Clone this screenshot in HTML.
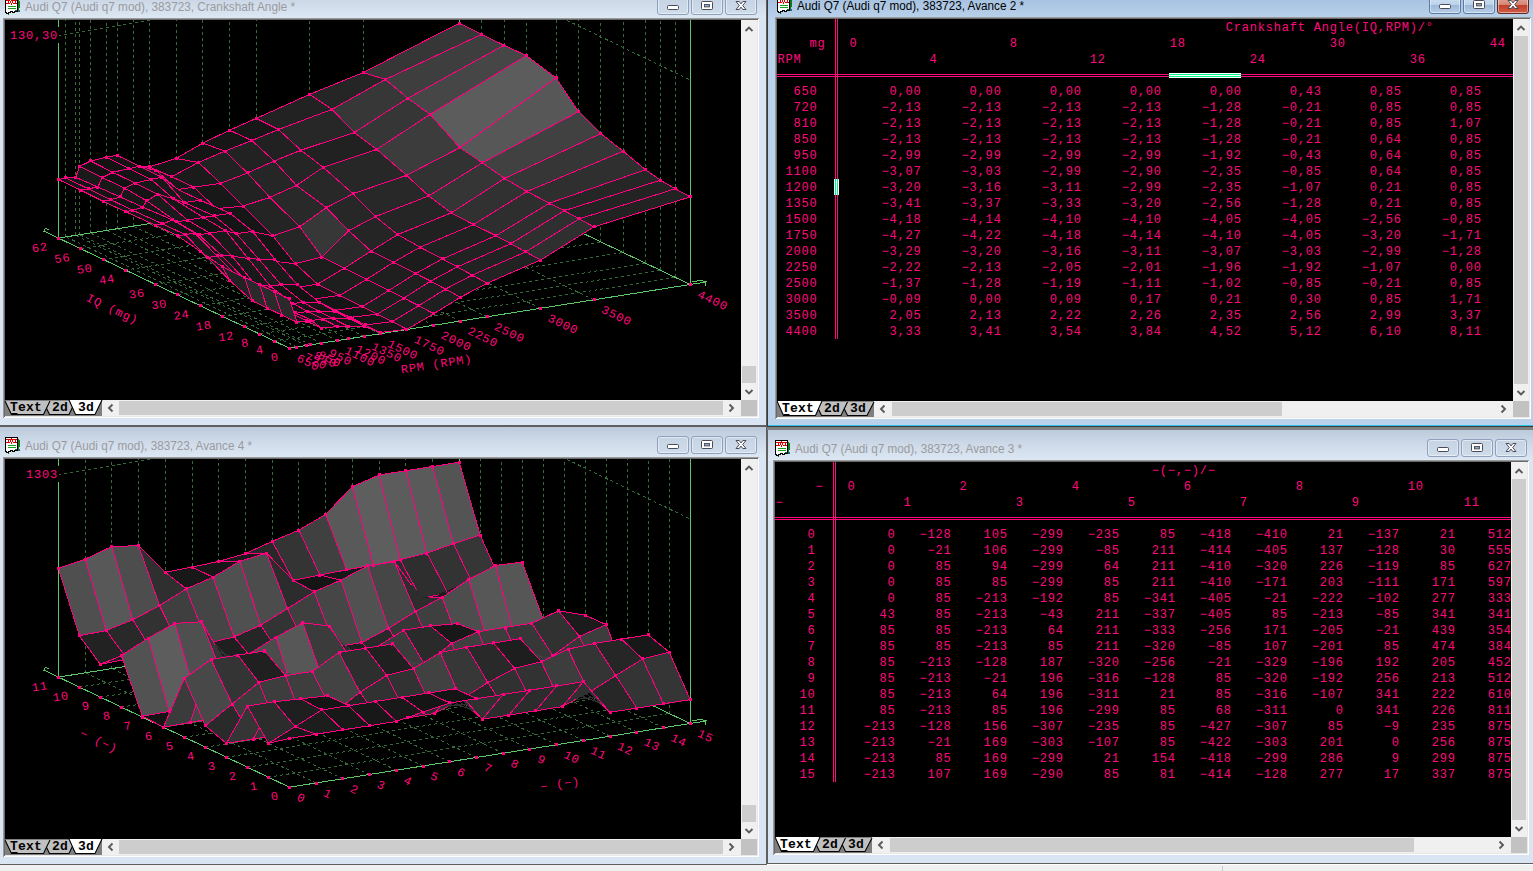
<!DOCTYPE html><html><head><meta charset="utf-8"><title>WinOLS</title><style>
*{box-sizing:border-box;margin:0;padding:0}
html,body{width:1533px;height:871px;overflow:hidden;background:#f0f0f0}
body{position:relative;font-family:"Liberation Sans",sans-serif}
.a{position:absolute}
.win{position:absolute;overflow:hidden}
.tt{position:absolute;font:12px "Liberation Sans",sans-serif;white-space:pre;transform-origin:0 0;line-height:14px}
.mono{position:absolute;font:12px "Liberation Mono",monospace;letter-spacing:0.8px;white-space:pre;color:#ff0a7c;line-height:16px;height:16px}
.tab{position:absolute;font:bold 13px "Liberation Mono",monospace;letter-spacing:0.2px;color:#000;white-space:pre;line-height:14px}
svg{position:absolute;display:block}
.d{width:3px;height:3px;fill:#ff0080;stroke:none}
.e{fill:none}
.t{font:12px "Liberation Mono",monospace;letter-spacing:0.8px;fill:#ff0a7c}
</style></head><body>
<div class="a" style="left:0px;top:864px;width:1533px;height:7px;background:#f0f0f0;border-top:1px solid #fff"></div>
<div class="a" style="left:1222px;top:866px;width:1px;height:5px;background:#c8c8c8;"></div>
<div class="a" style="left:-5px;top:-13px;width:772px;height:439px;background:#d9e5f2;border:1px solid #5f5f5f;"></div>
<div class="a" style="left:-4px;top:-12px;width:770px;height:31px;background:linear-gradient(#bccadb,#cfdbe9 50%,#dde8f4);"></div>
<div class="a" style="left:3px;top:18px;width:756px;height:400px;background:#fff;border-top:1px solid #9a9a9a;border-left:1px solid #9a9a9a;"></div>
<div class="a" style="left:4px;top:19px;width:754px;height:398px;background:#e8e8e8;border-top:1px solid #6a6a6a;border-left:1px solid #6a6a6a;"></div>
<div class="a" style="left:5px;top:20px;width:736px;height:380px;background:#000;"></div>
<svg style="left:5px;top:-2px" width="17" height="17" viewBox="0 0 17 17" shape-rendering="crispEdges"><path d="M0.5 0.5H12.5V13.5H9.5V14.5H7.5V13.5H5.5V14.5H3.5V15.5H1.5V14.5H0.5Z" fill="#fff" stroke="#000"/><path d="M13 2V11M14 3V10M12 12H10M4 16H3M13 11v1" stroke="#0a7a1a" fill="none"/><path d="M13 12h2v2h-2z" fill="#1a6a8a"/><path d="M1 2.5H5M3 2.5V5.5M1 5.5H5 M8 2.5H12M10 2.5V5.5M8 5.5H12" stroke="#e00000" fill="none"/><path d="M6.5 2L8 4L6.5 6L5 4Z" stroke="#e00000" fill="none"/><path d="M3 8.5H11" stroke="#16a020"/><path d="M3 10.5H11" stroke="#16a020"/></svg>
<div class="tt" style="left:25px;top:0px;color:#9a9a9e;transform:scaleX(0.9824)">Audi Q7 (Audi q7 mod), 383723, Crankshaft Angle *</div>
<div class="a" style="left:657px;top:-3px;width:32px;height:18px;border:1px solid #8f9fbc;border-radius:3px;background:linear-gradient(#c5d3e3,#cfdcea);box-shadow:inset 0 0 0 1px rgba(255,255,255,.45)"></div>
<svg style="left:657px;top:-3px" width="32" height="18" viewBox="0 0 32 18"><rect x="10.5" y="8.5" width="11" height="4" rx="1" fill="#fff" stroke="#4a4a58"/></svg>
<div class="a" style="left:691px;top:-3px;width:32px;height:18px;border:1px solid #8f9fbc;border-radius:3px;background:linear-gradient(#c5d3e3,#cfdcea);box-shadow:inset 0 0 0 1px rgba(255,255,255,.45)"></div>
<svg style="left:691px;top:-3px" width="32" height="18" viewBox="0 0 32 18"><rect x="10.5" y="4.5" width="11" height="8" rx="1" fill="#fff" stroke="#4a4a58"/><rect x="13.5" y="7.5" width="5" height="2.4" fill="#8ea4c4" stroke="#4a4a58" stroke-width=".9"/></svg>
<div class="a" style="left:725px;top:-3px;width:32px;height:18px;border:1px solid #8f9fbc;border-radius:3px;background:linear-gradient(#c5d3e3,#cfdcea);box-shadow:inset 0 0 0 1px rgba(255,255,255,.45)"></div>
<svg style="left:725px;top:-3px" width="32" height="18" viewBox="0 0 32 18"><path d="M11 4.5h3.2l1.8 2.4 1.8-2.4H21l-3.3 4 3.3 4h-3.2L16 10.1l-1.8 2.4H11l3.3-4z" fill="#fff" stroke="#4a4a58" stroke-width="1"/></svg>
<div class="a" style="left:741px;top:20px;width:16px;height:380px;background:#f0f0f0;"></div>
<div class="a" style="left:742px;top:366px;width:14px;height:17px;background:#cdcdcd;"></div>
<svg style="left:741px;top:20px" width="16" height="380"><polyline points="4.5,11 8,7.5 11.5,11" fill="none" stroke="#5a5a5a" stroke-width="1.9"/><polyline points="4.5,370 8,373.5 11.5,370" fill="none" stroke="#5a5a5a" stroke-width="1.9"/></svg>
<div class="a" style="left:741px;top:400px;width:16px;height:16px;background:#c2c2c2;"></div>
<div class="a" style="left:5px;top:400px;width:97px;height:16px;background:#808080;"></div>
<div class="a" style="left:102px;top:400px;width:639px;height:16px;background:#f0f0f0;"></div>
<div class="a" style="left:119px;top:401px;width:604px;height:14px;background:#cdcdcd;"></div>
<svg style="left:102px;top:400px" width="639" height="16"><polyline points="10.5,4.5 7.0,8 10.5,11.5" fill="none" stroke="#5a5a5a" stroke-width="1.9"/><polyline points="627.5,4.5 631.0,8 627.5,11.5" fill="none" stroke="#5a5a5a" stroke-width="1.9"/></svg>
<svg style="left:5px;top:399px" width="98" height="17" viewBox="0 -1 98 17"><polygon points="38,1 70.5,1 64,14.5 44.5,14.5" fill="#c0c0c0" stroke="none"/><polyline points="38,1 44.5,14.5 64,14.5 70.5,1" fill="none" stroke="#000" stroke-width="1.1"/><polygon points="0,1 45,1 38.5,14.5 6.5,14.5" fill="#c0c0c0" stroke="none"/><polyline points="0,1 6.5,14.5 38.5,14.5 45,1" fill="none" stroke="#000" stroke-width="1.1"/><polygon points="64,0 97,0 90,14.5 70.5,14.5" fill="#fff" stroke="none"/><polyline points="64,0 70.5,14.5 90,14.5 97,0" fill="none" stroke="#000" stroke-width="1.1"/><path d="M6.5 13.5h6" stroke="#000" stroke-width="1"/></svg>
<div class="tab" style="left:10px;top:401px">Text</div>
<div class="tab" style="left:52px;top:401px">2d</div>
<div class="tab" style="left:78px;top:401px">3d</div>
<svg style="left:5px;top:20px" width="736" height="380" viewBox="5 20 736 380" shape-rendering="crispEdges" text-rendering="geometricPrecision">
<g fill="none" stroke-width="1"><line x1="65.9" y1="236.9" x2="65.9" y2="-87.6" stroke="#356b38" stroke-dasharray="3 3"/>
<line x1="75.6" y1="235.4" x2="75.6" y2="-89.1" stroke="#356b38" stroke-dasharray="3 3"/>
<line x1="79.8" y1="234.7" x2="79.8" y2="-89.8" stroke="#356b38" stroke-dasharray="3 3"/>
<line x1="90.5" y1="233" x2="90.5" y2="-91.5" stroke="#356b38" stroke-dasharray="3 3"/>
<line x1="106.5" y1="230.4" x2="106.5" y2="-94.1" stroke="#356b38" stroke-dasharray="3 3"/>
<line x1="117.2" y1="228.7" x2="117.2" y2="-95.8" stroke="#356b38" stroke-dasharray="3 3"/>
<line x1="133.3" y1="226.2" x2="133.3" y2="-98.3" stroke="#356b38" stroke-dasharray="3 3"/>
<line x1="149.3" y1="223.6" x2="149.3" y2="-100.9" stroke="#356b38" stroke-dasharray="3 3"/>
<line x1="176" y1="219.4" x2="176" y2="-105.1" stroke="#356b38" stroke-dasharray="3 3"/>
<line x1="202.7" y1="215.1" x2="202.7" y2="-109.4" stroke="#356b38" stroke-dasharray="3 3"/>
<line x1="229.5" y1="210.9" x2="229.5" y2="-113.6" stroke="#356b38" stroke-dasharray="3 3"/>
<line x1="256.2" y1="206.6" x2="256.2" y2="-117.9" stroke="#356b38" stroke-dasharray="3 3"/>
<line x1="309.6" y1="198.1" x2="309.6" y2="-126.4" stroke="#356b38" stroke-dasharray="3 3"/>
<line x1="363.1" y1="189.6" x2="363.1" y2="-134.9" stroke="#356b38" stroke-dasharray="3 3"/>
<line x1="675.3" y1="277.4" x2="675.3" y2="-47.1" stroke="#356b38" stroke-dasharray="3 3"/>
<line x1="660.4" y1="270.3" x2="660.4" y2="-54.2" stroke="#356b38" stroke-dasharray="3 3"/>
<line x1="645.5" y1="263.2" x2="645.5" y2="-61.3" stroke="#356b38" stroke-dasharray="3 3"/>
<line x1="623.2" y1="252.5" x2="623.2" y2="-72" stroke="#356b38" stroke-dasharray="3 3"/>
<line x1="600.8" y1="241.9" x2="600.8" y2="-82.6" stroke="#356b38" stroke-dasharray="3 3"/>
<line x1="578.5" y1="231.2" x2="578.5" y2="-93.3" stroke="#356b38" stroke-dasharray="3 3"/>
<line x1="556.1" y1="220.5" x2="556.1" y2="-104" stroke="#356b38" stroke-dasharray="3 3"/>
<line x1="526.3" y1="206.3" x2="526.3" y2="-118.2" stroke="#356b38" stroke-dasharray="3 3"/>
<line x1="504" y1="195.7" x2="504" y2="-128.8" stroke="#356b38" stroke-dasharray="3 3"/>
<line x1="481.6" y1="185" x2="481.6" y2="-139.5" stroke="#356b38" stroke-dasharray="3 3"/>
<line x1="58.4" y1="35.8" x2="459.2" y2="-31.7" stroke="#356b38" stroke-dasharray="3 3"/>
<line x1="459.2" y1="-31.7" x2="690.2" y2="80" stroke="#356b38" stroke-dasharray="3 3"/>
<line x1="296.9" y1="347.1" x2="65.9" y2="236.9" stroke="#356b38" stroke-dasharray="3 3"/>
<line x1="306.5" y1="345.5" x2="75.6" y2="235.4" stroke="#356b38" stroke-dasharray="3 3"/>
<line x1="310.8" y1="344.9" x2="79.8" y2="234.7" stroke="#356b38" stroke-dasharray="3 3"/>
<line x1="321.5" y1="343.1" x2="90.5" y2="233" stroke="#356b38" stroke-dasharray="3 3"/>
<line x1="337.5" y1="340.6" x2="106.5" y2="230.4" stroke="#356b38" stroke-dasharray="3 3"/>
<line x1="348.2" y1="338.9" x2="117.2" y2="228.7" stroke="#356b38" stroke-dasharray="3 3"/>
<line x1="364.2" y1="336.4" x2="133.3" y2="226.2" stroke="#356b38" stroke-dasharray="3 3"/>
<line x1="380.2" y1="333.8" x2="149.3" y2="223.6" stroke="#356b38" stroke-dasharray="3 3"/>
<line x1="407" y1="329.6" x2="176" y2="219.4" stroke="#356b38" stroke-dasharray="3 3"/>
<line x1="433.7" y1="325.3" x2="202.7" y2="215.1" stroke="#356b38" stroke-dasharray="3 3"/>
<line x1="460.4" y1="321.1" x2="229.5" y2="210.9" stroke="#356b38" stroke-dasharray="3 3"/>
<line x1="487.1" y1="316.8" x2="256.2" y2="206.6" stroke="#356b38" stroke-dasharray="3 3"/>
<line x1="540.6" y1="308.3" x2="309.6" y2="198.1" stroke="#356b38" stroke-dasharray="3 3"/>
<line x1="594" y1="299.8" x2="363.1" y2="189.6" stroke="#356b38" stroke-dasharray="3 3"/>
<line x1="274.5" y1="341.1" x2="675.3" y2="277.4" stroke="#356b38" stroke-dasharray="3 3"/>
<line x1="259.6" y1="334" x2="660.4" y2="270.3" stroke="#356b38" stroke-dasharray="3 3"/>
<line x1="244.7" y1="326.9" x2="645.5" y2="263.2" stroke="#356b38" stroke-dasharray="3 3"/>
<line x1="222.4" y1="316.3" x2="623.2" y2="252.5" stroke="#356b38" stroke-dasharray="3 3"/>
<line x1="200" y1="305.6" x2="600.8" y2="241.9" stroke="#356b38" stroke-dasharray="3 3"/>
<line x1="177.7" y1="294.9" x2="578.5" y2="231.2" stroke="#356b38" stroke-dasharray="3 3"/>
<line x1="155.3" y1="284.3" x2="556.1" y2="220.5" stroke="#356b38" stroke-dasharray="3 3"/>
<line x1="125.5" y1="270.1" x2="526.3" y2="206.3" stroke="#356b38" stroke-dasharray="3 3"/>
<line x1="103.2" y1="259.4" x2="504" y2="195.7" stroke="#356b38" stroke-dasharray="3 3"/>
<line x1="80.8" y1="248.7" x2="481.6" y2="185" stroke="#356b38" stroke-dasharray="3 3"/>
<line x1="289.4" y1="348.2" x2="58.4" y2="238.1" stroke="#5cc868"/>
<line x1="58.4" y1="238.1" x2="459.2" y2="174.3" stroke="#5cc868"/>
<line x1="459.2" y1="174.3" x2="690.2" y2="284.5" stroke="#5cc868"/>
<line x1="690.2" y1="284.5" x2="289.4" y2="348.2" stroke="#5cc868"/>
<line x1="58.4" y1="238.1" x2="58.4" y2="3.6" stroke="#5cc868"/>
<line x1="459.2" y1="174.3" x2="459.2" y2="-90.2" stroke="#5cc868"/>
<line x1="690.2" y1="284.5" x2="690.2" y2="0" stroke="#5cc868"/>
<polyline points="690.2,284.5 706,282 705.5,286" fill="none" stroke="#5cc868"/>
<polyline points="692.2,281.5 702,280.5 706,282" fill="none" stroke="#5cc868"/>
<polyline points="58.4,238.1 44,231.2 45.5,228.2 49,229.7" fill="none" stroke="#5cc868"/></g>
<g stroke="#ff0080" stroke-width="1"><path d="M385.4,79.4 363.1,72.6 459.2,23.2 481.6,34.4z" fill="#363636" stroke="#363636" stroke-width=".7"/>
<path d="M332,109.4 309.6,94.4 363.1,72.6 385.4,79.4z" fill="#252525" stroke="#252525" stroke-width=".7"/>
<path d="M278.5,129.5 256.2,118.4 309.6,94.4 332,109.4z" fill="#222222" stroke="#222222" stroke-width=".7"/>
<path d="M251.8,140.5 229.5,130.2 256.2,118.4 278.5,129.5z" fill="#171717" stroke="#171717" stroke-width=".7"/>
<path d="M225.1,151.1 202.7,143.2 229.5,130.2 251.8,140.5z" fill="#161616" stroke="#161616" stroke-width=".7"/>
<path d="M198.4,162.4 176,158.5 202.7,143.2 225.1,151.1z" fill="#151515" stroke="#151515" stroke-width=".7"/>
<path d="M171.6,176.7 149.3,166.9 176,158.5 198.4,162.4z" fill="#151515" stroke="#151515" stroke-width=".7"/>
<path d="M155.6,170.1 133.3,166.2 149.3,166.9 171.6,176.7z" fill="#1d1d1d" stroke="#1d1d1d" stroke-width=".7"/>
<path d="M139.6,166.3 117.2,155.3 133.3,166.2 155.6,170.1z" fill="#202020" stroke="#202020" stroke-width=".7"/>
<path d="M128.9,168.6 106.5,157.2 117.2,155.3 139.6,166.3z" fill="#141414" stroke="#141414" stroke-width=".7"/>
<path d="M112.9,172.3 90.5,161 106.5,157.2 128.9,168.6z" fill="#131313" stroke="#131313" stroke-width=".7"/>
<path d="M102.2,177.6 79.8,166.3 90.5,161 112.9,172.3z" fill="#131313" stroke="#131313" stroke-width=".7"/>
<path d="M97.9,187 75.6,177.3 79.8,166.3 102.2,177.6z" fill="#1a1a1a" stroke="#1a1a1a" stroke-width=".7"/>
<path d="M88.3,188.8 65.9,178 75.6,177.3 97.9,187z" fill="#151515" stroke="#151515" stroke-width=".7"/>
<path d="M80.8,190.1 58.4,179.5 65.9,178 88.3,188.8z" fill="#151515" stroke="#151515" stroke-width=".7"/>
<path d="M407.8,98.3 385.4,79.4 481.6,34.4 504,45.2z" fill="#3e3e3e" stroke="#3e3e3e" stroke-width=".7"/>
<path d="M354.3,132.5 332,109.4 385.4,79.4 407.8,98.3z" fill="#373737" stroke="#373737" stroke-width=".7"/>
<path d="M300.9,150.2 278.5,129.5 332,109.4 354.3,132.5z" fill="#272727" stroke="#272727" stroke-width=".7"/>
<path d="M274.2,161 251.8,140.5 278.5,129.5 300.9,150.2z" fill="#212121" stroke="#212121" stroke-width=".7"/>
<path d="M247.4,173 225.1,151.1 251.8,140.5 274.2,161z" fill="#222222" stroke="#222222" stroke-width=".7"/>
<path d="M220.7,183.4 198.4,162.4 225.1,151.1 247.4,173z" fill="#222222" stroke="#222222" stroke-width=".7"/>
<path d="M194,187.2 171.6,176.7 198.4,162.4 220.7,183.4zM196.2,177.4 185,169.6 198.4,162.4 209.5,172.9zM182.8,182 171.6,176.7 185,169.6 196.2,177.4zM207.4,185.3 196.2,177.4 209.5,172.9 220.7,183.4zM194,187.2 182.8,182 196.2,177.4 207.4,185.3z" fill="#1b1b1b" stroke="#1b1b1b" stroke-width=".7"/>
<path d="M178,189.5 155.6,170.1 171.6,176.7 194,187.2z" fill="#181818" stroke="#181818" stroke-width=".7"/>
<path d="M161.9,177.2 139.6,166.3 155.6,170.1 178,189.5z" fill="#1b1b1b" stroke="#1b1b1b" stroke-width=".7"/>
<path d="M151.2,179.4 128.9,168.6 139.6,166.3 161.9,177.2z" fill="#141414" stroke="#141414" stroke-width=".7"/>
<path d="M135.2,183.2 112.9,172.3 128.9,168.6 151.2,179.4z" fill="#141414" stroke="#141414" stroke-width=".7"/>
<path d="M124.5,188 102.2,177.6 112.9,172.3 135.2,183.2z" fill="#121212" stroke="#121212" stroke-width=".7"/>
<path d="M120.3,197 97.9,187 102.2,177.6 124.5,188z" fill="#181818" stroke="#181818" stroke-width=".7"/>
<path d="M110.6,199.7 88.3,188.8 97.9,187 120.3,197z" fill="#141414" stroke="#141414" stroke-width=".7"/>
<path d="M103.2,201.4 80.8,190.1 88.3,188.8 110.6,199.7z" fill="#141414" stroke="#141414" stroke-width=".7"/>
<path d="M430.1,114.4 407.8,98.3 504,45.2 526.3,55.6z" fill="#464646" stroke="#464646" stroke-width=".7"/>
<path d="M376.7,149.3 354.3,132.5 407.8,98.3 430.1,114.4z" fill="#363636" stroke="#363636" stroke-width=".7"/>
<path d="M323.2,167.3 300.9,150.2 354.3,132.5 376.7,149.3z" fill="#212121" stroke="#212121" stroke-width=".7"/>
<path d="M296.5,185.4 274.2,161 300.9,150.2 323.2,167.3z" fill="#252525" stroke="#252525" stroke-width=".7"/>
<path d="M269.8,197.3 247.4,173 274.2,161 296.5,185.4z" fill="#262626" stroke="#262626" stroke-width=".7"/>
<path d="M243.1,206.1 220.7,183.4 247.4,173 269.8,197.3z" fill="#222222" stroke="#222222" stroke-width=".7"/>
<path d="M216.3,208.6 194,187.2 220.7,183.4 243.1,206.1z" fill="#181818" stroke="#181818" stroke-width=".7"/>
<path d="M200.3,200.2 178,189.5 194,187.2 216.3,208.6zM197.2,196.4 186,188.4 194,187.2 205.2,197.9zM189.1,194.8 178,189.5 186,188.4 197.2,196.4zM208.3,204.4 197.2,196.4 205.2,197.9 216.3,208.6zM200.3,200.2 189.1,194.8 197.2,196.4 208.3,204.4z" fill="#191919" stroke="#191919" stroke-width=".7"/>
<path d="M184.3,202.6 161.9,177.2 178,189.5 200.3,200.2zM181.1,192.4 170,183.3 178,189.5 189.1,194.8zM173.1,189.9 161.9,177.2 170,183.3 181.1,192.4zM192.3,201.4 181.1,192.4 189.1,194.8 200.3,200.2zM184.3,202.6 173.1,189.9 181.1,192.4 192.3,201.4z" fill="#1b1b1b" stroke="#1b1b1b" stroke-width=".7"/>
<path d="M173.6,198.9 151.2,179.4 161.9,177.2 184.3,202.6z" fill="#181818" stroke="#181818" stroke-width=".7"/>
<path d="M157.6,194.1 135.2,183.2 151.2,179.4 173.6,198.9z" fill="#171717" stroke="#171717" stroke-width=".7"/>
<path d="M146.9,201 124.5,188 135.2,183.2 157.6,194.1z" fill="#141414" stroke="#141414" stroke-width=".7"/>
<path d="M142.6,207 120.3,197 124.5,188 146.9,201z" fill="#181818" stroke="#181818" stroke-width=".7"/>
<path d="M133,210.4 110.6,199.7 120.3,197 142.6,207z" fill="#141414" stroke="#141414" stroke-width=".7"/>
<path d="M125.5,211.6 103.2,201.4 110.6,199.7 133,210.4z" fill="#151515" stroke="#151515" stroke-width=".7"/>
<path d="M459.9,147.7 430.1,114.4 526.3,55.6 556.1,77.9zM493.1,98.9 478.2,85 526.3,55.6 541.2,66.8zM445,131.1 430.1,114.4 478.2,85 493.1,98.9zM508,112.8 493.1,98.9 541.2,66.8 556.1,77.9zM459.9,147.7 445,131.1 493.1,98.9 508,112.8z" fill="#5c5c5c" stroke="#5c5c5c" stroke-width=".7"/>
<path d="M406.5,175.3 376.7,149.3 430.1,114.4 459.9,147.7z" fill="#3c3c3c" stroke="#3c3c3c" stroke-width=".7"/>
<path d="M353,193.7 323.2,167.3 376.7,149.3 406.5,175.3z" fill="#272727" stroke="#272727" stroke-width=".7"/>
<path d="M326.3,207.7 296.5,185.4 323.2,167.3 353,193.7z" fill="#282828" stroke="#282828" stroke-width=".7"/>
<path d="M299.6,226.7 269.8,197.3 296.5,185.4 326.3,207.7z" fill="#292929" stroke="#292929" stroke-width=".7"/>
<path d="M272.9,235.9 243.1,206.1 269.8,197.3 299.6,226.7z" fill="#242424" stroke="#242424" stroke-width=".7"/>
<path d="M246.1,230.3 216.3,208.6 243.1,206.1 272.9,235.9z" fill="#161616" stroke="#161616" stroke-width=".7"/>
<path d="M230.1,213.3 200.3,200.2 216.3,208.6 246.1,230.3z" fill="#202020" stroke="#202020" stroke-width=".7"/>
<path d="M214.1,215.8 184.3,202.6 200.3,200.2 230.1,213.3z" fill="#161616" stroke="#161616" stroke-width=".7"/>
<path d="M203.4,217.5 173.6,198.9 184.3,202.6 214.1,215.8z" fill="#161616" stroke="#161616" stroke-width=".7"/>
<path d="M187.4,220.1 157.6,194.1 173.6,198.9 203.4,217.5z" fill="#161616" stroke="#161616" stroke-width=".7"/>
<path d="M176.7,221.8 146.9,201 157.6,194.1 187.4,220.1z" fill="#1b1b1b" stroke="#1b1b1b" stroke-width=".7"/>
<path d="M172.4,219.9 142.6,207 146.9,201 176.7,221.8z" fill="#161616" stroke="#161616" stroke-width=".7"/>
<path d="M162.8,224 133,210.4 142.6,207 172.4,219.9z" fill="#141414" stroke="#141414" stroke-width=".7"/>
<path d="M155.3,225.2 125.5,211.6 133,210.4 162.8,224z" fill="#151515" stroke="#151515" stroke-width=".7"/>
<path d="M482.3,162.8 459.9,147.7 556.1,77.9 578.5,111.7zM519.2,125 508,112.8 556.1,77.9 567.3,94.8zM471.1,155.3 459.9,147.7 508,112.8 519.2,125zM530.4,137.2 519.2,125 567.3,94.8 578.5,111.7zM482.3,162.8 471.1,155.3 519.2,125 530.4,137.2z" fill="#575757" stroke="#575757" stroke-width=".7"/>
<path d="M428.8,195.9 406.5,175.3 459.9,147.7 482.3,162.8z" fill="#323232" stroke="#323232" stroke-width=".7"/>
<path d="M375.4,216.6 353,193.7 406.5,175.3 428.8,195.9z" fill="#282828" stroke="#282828" stroke-width=".7"/>
<path d="M348.7,230.7 326.3,207.7 353,193.7 375.4,216.6z" fill="#272727" stroke="#272727" stroke-width=".7"/>
<path d="M321.9,257 299.6,226.7 326.3,207.7 348.7,230.7z" fill="#373737" stroke="#373737" stroke-width=".7"/>
<path d="M295.2,263.7 272.9,235.9 299.6,226.7 321.9,257z" fill="#262626" stroke="#262626" stroke-width=".7"/>
<path d="M268.5,260.6 246.1,230.3 272.9,235.9 295.2,263.7z" fill="#151515" stroke="#151515" stroke-width=".7"/>
<path d="M252.5,231.3 230.1,213.3 246.1,230.3 268.5,260.6zM249.3,233.9 238.1,221.8 246.1,230.3 257.3,245.4zM241.3,222.3 230.1,213.3 238.1,221.8 249.3,233.9zM260.5,245.9 249.3,233.9 257.3,245.4 268.5,260.6zM252.5,231.3 241.3,222.3 249.3,233.9 260.5,245.9z" fill="#222222" stroke="#222222" stroke-width=".7"/>
<path d="M236.4,233.8 214.1,215.8 230.1,213.3 252.5,231.3z" fill="#151515" stroke="#151515" stroke-width=".7"/>
<path d="M225.7,230.6 203.4,217.5 214.1,215.8 236.4,233.8z" fill="#151515" stroke="#151515" stroke-width=".7"/>
<path d="M209.7,233.1 187.4,220.1 203.4,217.5 225.7,230.6z" fill="#131313" stroke="#131313" stroke-width=".7"/>
<path d="M199,234.8 176.7,221.8 187.4,220.1 209.7,233.1z" fill="#131313" stroke="#131313" stroke-width=".7"/>
<path d="M194.8,233.1 172.4,219.9 176.7,221.8 199,234.8z" fill="#151515" stroke="#151515" stroke-width=".7"/>
<path d="M185.1,234.6 162.8,224 172.4,219.9 194.8,233.1z" fill="#141414" stroke="#141414" stroke-width=".7"/>
<path d="M177.7,235.8 155.3,225.2 162.8,224 185.1,234.6z" fill="#151515" stroke="#151515" stroke-width=".7"/>
<path d="M504.6,178.4 482.3,162.8 578.5,111.7 600.8,133.6z" fill="#414141" stroke="#414141" stroke-width=".7"/>
<path d="M451.2,212.9 428.8,195.9 482.3,162.8 504.6,178.4z" fill="#353535" stroke="#353535" stroke-width=".7"/>
<path d="M397.7,234.6 375.4,216.6 428.8,195.9 451.2,212.9z" fill="#252525" stroke="#252525" stroke-width=".7"/>
<path d="M371,251.1 348.7,230.7 375.4,216.6 397.7,234.6z" fill="#252525" stroke="#252525" stroke-width=".7"/>
<path d="M344.3,268.2 321.9,257 348.7,230.7 371,251.1zM346.5,251.8 335.3,243.9 348.7,230.7 359.8,240.9zM333.1,262.6 321.9,257 335.3,243.9 346.5,251.8zM357.6,259.7 346.5,251.8 359.8,240.9 371,251.1zM344.3,268.2 333.1,262.6 346.5,251.8 357.6,259.7z" fill="#2a2a2a" stroke="#2a2a2a" stroke-width=".7"/>
<path d="M317.6,284.1 295.2,263.7 321.9,257 344.3,268.2zM319.8,268.3 308.6,260.4 321.9,257 333.1,262.6zM306.4,273.9 295.2,263.7 308.6,260.4 319.8,268.3zM330.9,276.2 319.8,268.3 333.1,262.6 344.3,268.2zM317.6,284.1 306.4,273.9 319.8,268.3 330.9,276.2z" fill="#1d1d1d" stroke="#1d1d1d" stroke-width=".7"/>
<path d="M290.8,288.4 268.5,260.6 295.2,263.7 317.6,284.1z" fill="#181818" stroke="#181818" stroke-width=".7"/>
<path d="M274.8,259.1 252.5,231.3 268.5,260.6 290.8,288.4z" fill="#252525" stroke="#252525" stroke-width=".7"/>
<path d="M258.8,259.2 236.4,233.8 252.5,231.3 274.8,259.1z" fill="#1d1d1d" stroke="#1d1d1d" stroke-width=".7"/>
<path d="M248.1,258.4 225.7,230.6 236.4,233.8 258.8,259.2z" fill="#191919" stroke="#191919" stroke-width=".7"/>
<path d="M232.1,256.1 209.7,233.1 225.7,230.6 248.1,258.4z" fill="#1a1a1a" stroke="#1a1a1a" stroke-width=".7"/>
<path d="M221.4,255.3 199,234.8 209.7,233.1 232.1,256.1z" fill="#171717" stroke="#171717" stroke-width=".7"/>
<path d="M217.1,256 194.8,233.1 199,234.8 221.4,255.3z" fill="#171717" stroke="#171717" stroke-width=".7"/>
<path d="M207.5,257.5 185.1,234.6 194.8,233.1 217.1,256z" fill="#1a1a1a" stroke="#1a1a1a" stroke-width=".7"/>
<path d="M200,251.3 177.7,235.8 185.1,234.6 207.5,257.5z" fill="#161616" stroke="#161616" stroke-width=".7"/>
<path d="M527,191.5 504.6,178.4 600.8,133.6 623.2,151.2z" fill="#363636" stroke="#363636" stroke-width=".7"/>
<path d="M473.5,224.6 451.2,212.9 504.6,178.4 527,191.5z" fill="#313131" stroke="#313131" stroke-width=".7"/>
<path d="M420.1,247.2 397.7,234.6 451.2,212.9 473.5,224.6z" fill="#212121" stroke="#212121" stroke-width=".7"/>
<path d="M393.4,262.3 371,251.1 397.7,234.6 420.1,247.2z" fill="#1e1e1e" stroke="#1e1e1e" stroke-width=".7"/>
<path d="M366.6,279.3 344.3,268.2 371,251.1 393.4,262.3z" fill="#1f1f1f" stroke="#1f1f1f" stroke-width=".7"/>
<path d="M339.9,295.4 317.6,284.1 344.3,268.2 366.6,279.3z" fill="#1e1e1e" stroke="#1e1e1e" stroke-width=".7"/>
<path d="M313.2,299.1 290.8,288.4 317.6,284.1 339.9,295.4z" fill="#151515" stroke="#151515" stroke-width=".7"/>
<path d="M297.2,284.5 274.8,259.1 290.8,288.4 313.2,299.1zM294,282.8 282.8,273.7 290.8,288.4 302,293.7zM286,271.8 274.8,259.1 282.8,273.7 294,282.8zM305.2,291.8 294,282.8 302,293.7 313.2,299.1zM297.2,284.5 286,271.8 294,282.8 305.2,291.8z" fill="#252525" stroke="#252525" stroke-width=".7"/>
<path d="M281.1,284.6 258.8,259.2 274.8,259.1 297.2,284.5z" fill="#1a1a1a" stroke="#1a1a1a" stroke-width=".7"/>
<path d="M270.4,286.3 248.1,258.4 258.8,259.2 281.1,284.6z" fill="#1d1d1d" stroke="#1d1d1d" stroke-width=".7"/>
<path d="M254.4,283.9 232.1,256.1 248.1,258.4 270.4,286.3z" fill="#191919" stroke="#191919" stroke-width=".7"/>
<path d="M243.7,278.2 221.4,255.3 232.1,256.1 254.4,283.9z" fill="#171717" stroke="#171717" stroke-width=".7"/>
<path d="M239.5,278.9 217.1,256 221.4,255.3 243.7,278.2z" fill="#1a1a1a" stroke="#1a1a1a" stroke-width=".7"/>
<path d="M229.8,280.5 207.5,257.5 217.1,256 239.5,278.9z" fill="#1a1a1a" stroke="#1a1a1a" stroke-width=".7"/>
<path d="M222.4,266.9 200,251.3 207.5,257.5 229.8,280.5z" fill="#191919" stroke="#191919" stroke-width=".7"/>
<path d="M549.3,203.2 527,191.5 623.2,151.2 645.5,169.7z" fill="#2f2f2f" stroke="#2f2f2f" stroke-width=".7"/>
<path d="M495.9,235.7 473.5,224.6 527,191.5 549.3,203.2z" fill="#2e2e2e" stroke="#2e2e2e" stroke-width=".7"/>
<path d="M442.4,258.9 420.1,247.2 473.5,224.6 495.9,235.7z" fill="#212121" stroke="#212121" stroke-width=".7"/>
<path d="M415.7,273.5 393.4,262.3 420.1,247.2 442.4,258.9z" fill="#1c1c1c" stroke="#1c1c1c" stroke-width=".7"/>
<path d="M389,290.4 366.6,279.3 393.4,262.3 415.7,273.5z" fill="#1f1f1f" stroke="#1f1f1f" stroke-width=".7"/>
<path d="M362.3,306.5 339.9,295.4 366.6,279.3 389,290.4z" fill="#1e1e1e" stroke="#1e1e1e" stroke-width=".7"/>
<path d="M335.5,310.3 313.2,299.1 339.9,295.4 362.3,306.5z" fill="#151515" stroke="#151515" stroke-width=".7"/>
<path d="M319.5,302.5 297.2,284.5 313.2,299.1 335.5,310.3z" fill="#1e1e1e" stroke="#1e1e1e" stroke-width=".7"/>
<path d="M303.5,302.6 281.1,284.6 297.2,284.5 319.5,302.5z" fill="#121212" stroke="#121212" stroke-width=".7"/>
<path d="M292.8,303.3 270.4,286.3 281.1,284.6 303.5,302.6z" fill="#141414" stroke="#141414" stroke-width=".7"/>
<path d="M276.8,306.9 254.4,283.9 270.4,286.3 292.8,303.3z" fill="#171717" stroke="#171717" stroke-width=".7"/>
<path d="M266.1,298.7 243.7,278.2 254.4,283.9 276.8,306.9z" fill="#151515" stroke="#151515" stroke-width=".7"/>
<path d="M261.8,299.4 239.5,278.9 243.7,278.2 266.1,298.7z" fill="#181818" stroke="#181818" stroke-width=".7"/>
<path d="M252.2,300.9 229.8,280.5 239.5,278.9 261.8,299.4z" fill="#181818" stroke="#181818" stroke-width=".7"/>
<path d="M244.7,277.6 222.4,266.9 229.8,280.5 252.2,300.9zM237.3,281.5 226.1,273.7 229.8,280.5 241,290.7zM233.5,272.3 222.4,266.9 226.1,273.7 237.3,281.5zM248.4,289.2 237.3,281.5 241,290.7 252.2,300.9zM244.7,277.6 233.5,272.3 237.3,281.5 248.4,289.2z" fill="#222222" stroke="#222222" stroke-width=".7"/>
<path d="M564.2,210.7 549.3,203.2 645.5,169.7 660.4,180.2z" fill="#262626" stroke="#262626" stroke-width=".7"/>
<path d="M510.8,243.7 495.9,235.7 549.3,203.2 564.2,210.7z" fill="#2e2e2e" stroke="#2e2e2e" stroke-width=".7"/>
<path d="M457.3,266.9 442.4,258.9 495.9,235.7 510.8,243.7z" fill="#222222" stroke="#222222" stroke-width=".7"/>
<path d="M430.6,281.1 415.7,273.5 442.4,258.9 457.3,266.9z" fill="#1c1c1c" stroke="#1c1c1c" stroke-width=".7"/>
<path d="M403.9,298.1 389,290.4 415.7,273.5 430.6,281.1z" fill="#1f1f1f" stroke="#1f1f1f" stroke-width=".7"/>
<path d="M377.2,314.1 362.3,306.5 389,290.4 403.9,298.1z" fill="#1e1e1e" stroke="#1e1e1e" stroke-width=".7"/>
<path d="M350.4,317.4 335.5,310.3 362.3,306.5 377.2,314.1z" fill="#151515" stroke="#151515" stroke-width=".7"/>
<path d="M334.4,311.1 319.5,302.5 335.5,310.3 350.4,317.4z" fill="#1d1d1d" stroke="#1d1d1d" stroke-width=".7"/>
<path d="M318.4,311.1 303.5,302.6 319.5,302.5 334.4,311.1z" fill="#161616" stroke="#161616" stroke-width=".7"/>
<path d="M307.7,311.4 292.8,303.3 303.5,302.6 318.4,311.1z" fill="#151515" stroke="#151515" stroke-width=".7"/>
<path d="M291.7,314 276.8,306.9 292.8,303.3 307.7,311.4z" fill="#141414" stroke="#141414" stroke-width=".7"/>
<path d="M281,305.8 266.1,298.7 276.8,306.9 291.7,314z" fill="#1d1d1d" stroke="#1d1d1d" stroke-width=".7"/>
<path d="M276.7,306.5 261.8,299.4 266.1,298.7 281,305.8z" fill="#151515" stroke="#151515" stroke-width=".7"/>
<path d="M267.1,308 252.2,300.9 261.8,299.4 276.7,306.5z" fill="#151515" stroke="#151515" stroke-width=".7"/>
<path d="M259.6,284.7 244.7,277.6 252.2,300.9 267.1,308z" fill="#2a2a2a" stroke="#2a2a2a" stroke-width=".7"/>
<path d="M579.1,218.9 564.2,210.7 660.4,180.2 675.3,188.8z" fill="#232323" stroke="#232323" stroke-width=".7"/>
<path d="M525.7,251.9 510.8,243.7 564.2,210.7 579.1,218.9z" fill="#2f2f2f" stroke="#2f2f2f" stroke-width=".7"/>
<path d="M472.2,275.1 457.3,266.9 510.8,243.7 525.7,251.9z" fill="#222222" stroke="#222222" stroke-width=".7"/>
<path d="M445.5,289.1 430.6,281.1 457.3,266.9 472.2,275.1z" fill="#1c1c1c" stroke="#1c1c1c" stroke-width=".7"/>
<path d="M418.8,305.7 403.9,298.1 430.6,281.1 445.5,289.1z" fill="#1f1f1f" stroke="#1f1f1f" stroke-width=".7"/>
<path d="M392.1,321.6 377.2,314.1 403.9,298.1 418.8,305.7z" fill="#1e1e1e" stroke="#1e1e1e" stroke-width=".7"/>
<path d="M365.3,325 350.4,317.4 377.2,314.1 392.1,321.6z" fill="#151515" stroke="#151515" stroke-width=".7"/>
<path d="M349.3,318.7 334.4,311.1 350.4,317.4 365.3,325z" fill="#1c1c1c" stroke="#1c1c1c" stroke-width=".7"/>
<path d="M333.3,318.8 318.4,311.1 334.4,311.1 349.3,318.7z" fill="#171717" stroke="#171717" stroke-width=".7"/>
<path d="M322.6,319 307.7,311.4 318.4,311.1 333.3,318.8z" fill="#161616" stroke="#161616" stroke-width=".7"/>
<path d="M306.6,321.1 291.7,314 307.7,311.4 322.6,319z" fill="#151515" stroke="#151515" stroke-width=".7"/>
<path d="M295.9,312.9 281,305.8 291.7,314 306.6,321.1z" fill="#1d1d1d" stroke="#1d1d1d" stroke-width=".7"/>
<path d="M291.6,313.6 276.7,306.5 281,305.8 295.9,312.9z" fill="#151515" stroke="#151515" stroke-width=".7"/>
<path d="M282,315.1 267.1,308 276.7,306.5 291.6,313.6z" fill="#151515" stroke="#151515" stroke-width=".7"/>
<path d="M274.5,291.8 259.6,284.7 267.1,308 282,315.1z" fill="#2a2a2a" stroke="#2a2a2a" stroke-width=".7"/>
<path d="M594,226.9 579.1,218.9 675.3,188.8 690.2,196.9z" fill="#222222" stroke="#222222" stroke-width=".7"/>
<path d="M540.6,260 525.7,251.9 579.1,218.9 594,226.9z" fill="#2f2f2f" stroke="#2f2f2f" stroke-width=".7"/>
<path d="M487.1,283.2 472.2,275.1 525.7,251.9 540.6,260z" fill="#222222" stroke="#222222" stroke-width=".7"/>
<path d="M460.4,297.2 445.5,289.1 472.2,275.1 487.1,283.2z" fill="#1c1c1c" stroke="#1c1c1c" stroke-width=".7"/>
<path d="M433.7,313.8 418.8,305.7 445.5,289.1 460.4,297.2z" fill="#1f1f1f" stroke="#1f1f1f" stroke-width=".7"/>
<path d="M407,329.3 392.1,321.6 418.8,305.7 433.7,313.8z" fill="#1e1e1e" stroke="#1e1e1e" stroke-width=".7"/>
<path d="M380.2,332.5 365.3,325 392.1,321.6 407,329.3z" fill="#151515" stroke="#151515" stroke-width=".7"/>
<path d="M364.2,326.2 349.3,318.7 365.3,325 380.2,332.5z" fill="#1c1c1c" stroke="#1c1c1c" stroke-width=".7"/>
<path d="M348.2,326.4 333.3,318.8 349.3,318.7 364.2,326.2z" fill="#171717" stroke="#171717" stroke-width=".7"/>
<path d="M337.5,326.6 322.6,319 333.3,318.8 348.2,326.4z" fill="#161616" stroke="#161616" stroke-width=".7"/>
<path d="M321.5,328.2 306.6,321.1 322.6,319 337.5,326.6z" fill="#151515" stroke="#151515" stroke-width=".7"/>
<path d="M310.8,320 295.9,312.9 306.6,321.1 321.5,328.2z" fill="#1d1d1d" stroke="#1d1d1d" stroke-width=".7"/>
<path d="M306.5,320.7 291.6,313.6 295.9,312.9 310.8,320z" fill="#151515" stroke="#151515" stroke-width=".7"/>
<path d="M296.9,322.2 282,315.1 291.6,313.6 306.5,320.7z" fill="#151515" stroke="#151515" stroke-width=".7"/>
<path d="M289.4,298.9 274.5,291.8 282,315.1 296.9,322.2z" fill="#2a2a2a" stroke="#2a2a2a" stroke-width=".7"/>
<path class="e" d="M289.4,298.9L274.5,291.8M289.4,298.9L296.9,322.2M296.9,322.2L282,315.1M296.9,322.2L306.5,320.7M306.5,320.7L294.3,314.9M306.5,320.7L310.8,320M310.8,320L295.9,312.9M310.8,320L321.5,328.2M321.5,328.2L306.6,321.1M321.5,328.2L337.5,326.6M337.5,326.6L322.6,319M337.5,326.6L348.2,326.4M348.2,326.4L333.3,318.8M348.2,326.4L364.2,326.2M364.2,326.2L349.3,318.7M364.2,326.2L380.2,332.5M380.2,332.5L365.3,325M380.2,332.5L407,329.3M407,329.3L392.1,321.6M407,329.3L433.7,313.8M433.7,313.8L418.8,305.7M433.7,313.8L460.4,297.2M460.4,297.2L445.5,289.1M460.4,297.2L487.1,283.2M487.1,283.2L472.2,275.1M487.1,283.2L540.6,260M540.6,260L525.7,251.9M540.6,260L594,226.9M594,226.9L579.1,218.9M594,226.9L690.2,196.9M690.2,196.9L675.3,188.8M274.5,291.8L259.6,284.7M274.5,291.8L282,315.1M282,315.1L267.1,308M282,315.1L283.5,314.9M293.7,313.2L295.9,312.9M295.9,312.9L293.2,311.6M295.9,312.9L298.3,314.8M306.2,320.8L306.6,321.1M306.6,321.1L305.7,320.7M306.6,321.1L307.6,321M310.6,320.6L322.6,319M322.6,319L307.7,311.4M322.6,319L333.3,318.8M333.3,318.8L318.4,311.1M333.3,318.8L349.3,318.7M349.3,318.7L334.4,311.1M349.3,318.7L365.3,325M365.3,325L350.4,317.4M365.3,325L392.1,321.6M392.1,321.6L377.2,314.1M392.1,321.6L418.8,305.7M418.8,305.7L403.9,298.1M418.8,305.7L445.5,289.1M445.5,289.1L430.6,281.1M445.5,289.1L472.2,275.1M472.2,275.1L457.3,266.9M472.2,275.1L525.7,251.9M525.7,251.9L510.8,243.7M525.7,251.9L579.1,218.9M579.1,218.9L564.2,210.7M579.1,218.9L675.3,188.8M675.3,188.8L660.4,180.2M259.6,284.7L244.7,277.6M259.6,284.7L267.1,308M267.1,308L252.2,300.9M267.1,308L268.6,307.8M295.2,313.4L307.7,311.4M307.7,311.4L292.8,303.3M307.7,311.4L318.4,311.1M318.4,311.1L303.5,302.6M318.4,311.1L334.4,311.1M334.4,311.1L319.5,302.5M334.4,311.1L350.4,317.4M350.4,317.4L335.5,310.3M350.4,317.4L377.2,314.1M377.2,314.1L362.3,306.5M377.2,314.1L403.9,298.1M403.9,298.1L389,290.4M403.9,298.1L430.6,281.1M430.6,281.1L415.7,273.5M430.6,281.1L457.3,266.9M457.3,266.9L442.4,258.9M457.3,266.9L510.8,243.7M510.8,243.7L495.9,235.7M510.8,243.7L564.2,210.7M564.2,210.7L549.3,203.2M564.2,210.7L660.4,180.2M660.4,180.2L645.5,169.7M244.7,277.6L222.4,266.9M244.7,277.6L252.2,300.9M252.2,300.9L229.8,280.5M252.2,300.9L253.7,300.7M290.8,303.7L292.8,303.3M292.8,303.3L289.6,300.9M284.8,297.2L270.4,286.3M292.8,303.3L303.5,302.6M303.5,302.6L281.1,284.6M303.5,302.6L319.5,302.5M319.5,302.5L297.2,284.5M319.5,302.5L335.5,310.3M335.5,310.3L322.6,303.8M335.5,310.3L362.3,306.5M362.3,306.5L339.9,295.4M362.3,306.5L389,290.4M389,290.4L366.6,279.3M389,290.4L415.7,273.5M415.7,273.5L393.4,262.3M415.7,273.5L442.4,258.9M442.4,258.9L420.1,247.2M442.4,258.9L495.9,235.7M495.9,235.7L473.5,224.6M495.9,235.7L549.3,203.2M549.3,203.2L527,191.5M549.3,203.2L645.5,169.7M645.5,169.7L623.2,151.2M222.4,266.9L200,251.3M222.4,266.9L229.8,280.5M229.8,280.5L207.5,257.5M229.8,280.5L231.4,280.2M233.5,272.8L217.1,256M242.7,277.2L221.4,255.3M253.2,282.3L232.1,256.1M258.9,284.6L270.4,286.3M270.4,286.3L248.1,258.4M270.4,286.3L281.1,284.6M281.1,284.6L258.8,259.2M281.1,284.6L297.2,284.5M297.2,284.5L274.8,259.1M297.2,284.5L303.5,290.2M304.2,290.9L304.6,291.3M314.7,298.8L339.9,295.4M339.9,295.4L317.6,284.1M339.9,295.4L366.6,279.3M366.6,279.3L344.3,268.2M366.6,279.3L393.4,262.3M393.4,262.3L371,251.1M393.4,262.3L420.1,247.2M420.1,247.2L397.7,234.6M420.1,247.2L473.5,224.6M473.5,224.6L451.2,212.9M473.5,224.6L527,191.5M527,191.5L504.6,178.4M527,191.5L623.2,151.2M623.2,151.2L600.8,133.6M200,251.3L177.7,235.8M200,251.3L207.5,257.5M207.5,257.5L185.1,234.6M207.5,257.5L217.1,256M217.1,256L194.8,233.1M217.1,256L221.4,255.3M221.4,255.3L199,234.8M221.4,255.3L232.1,256.1M232.1,256.1L209.7,233.1M232.1,256.1L248.1,258.4M248.1,258.4L225.7,230.6M248.1,258.4L258.8,259.2M258.8,259.2L236.4,233.8M258.8,259.2L274.8,259.1M274.8,259.1L252.5,231.3M274.8,259.1L276,261.3M299.8,287L317.6,284.1M317.6,284.1L295.2,263.7M317.6,284.1L344.3,268.2M344.3,268.2L321.9,257M344.3,268.2L371,251.1M371,251.1L348.7,230.7M371,251.1L397.7,234.6M397.7,234.6L375.4,216.6M397.7,234.6L451.2,212.9M451.2,212.9L428.8,195.9M451.2,212.9L504.6,178.4M504.6,178.4L482.3,162.8M504.6,178.4L600.8,133.6M600.8,133.6L578.5,111.7M177.7,235.8L155.3,225.2M177.7,235.8L185.1,234.6M185.1,234.6L162.8,224M185.1,234.6L194.8,233.1M194.8,233.1L172.4,219.9M194.8,233.1L199,234.8M199,234.8L176.7,221.8M199,234.8L209.7,233.1M209.7,233.1L187.4,220.1M209.7,233.1L225.7,230.6M225.7,230.6L203.4,217.5M225.7,230.6L236.4,233.8M236.4,233.8L214.1,215.8M236.4,233.8L252.5,231.3M252.5,231.3L230.1,213.3M252.5,231.3L254.2,234.4M276.1,261.5L295.2,263.7M295.2,263.7L272.9,235.9M295.2,263.7L321.9,257M321.9,257L299.6,226.7M321.9,257L348.7,230.7M348.7,230.7L326.3,207.7M348.7,230.7L375.4,216.6M375.4,216.6L353,193.7M375.4,216.6L428.8,195.9M428.8,195.9L406.5,175.3M428.8,195.9L482.3,162.8M482.3,162.8L459.9,147.7M482.3,162.8L578.5,111.7M578.5,111.7L556.1,77.9M155.3,225.2L125.5,211.6M155.3,225.2L162.8,224M162.8,224L133,210.4M162.8,224L172.4,219.9M172.4,219.9L142.6,207M172.4,219.9L176.7,221.8M176.7,221.8L146.9,201M176.7,221.8L187.4,220.1M187.4,220.1L157.6,194.1M187.4,220.1L203.4,217.5M203.4,217.5L173.6,198.9M203.4,217.5L214.1,215.8M214.1,215.8L184.3,202.6M214.1,215.8L230.1,213.3M230.1,213.3L200.3,200.2M230.1,213.3L232.6,215.9M251.6,231.4L272.9,235.9M272.9,235.9L243.1,206.1M272.9,235.9L299.6,226.7M299.6,226.7L269.8,197.3M299.6,226.7L326.3,207.7M326.3,207.7L296.5,185.4M326.3,207.7L353,193.7M353,193.7L323.2,167.3M353,193.7L406.5,175.3M406.5,175.3L376.7,149.3M406.5,175.3L459.9,147.7M459.9,147.7L430.1,114.4M459.9,147.7L556.1,77.9M556.1,77.9L526.3,55.6M125.5,211.6L103.2,201.4M125.5,211.6L133,210.4M133,210.4L110.6,199.7M133,210.4L142.6,207M142.6,207L120.3,197M142.6,207L146.9,201M146.9,201L124.5,188M146.9,201L157.6,194.1M157.6,194.1L135.2,183.2M157.6,194.1L173.6,198.9M173.6,198.9L151.2,179.4M173.6,198.9L184.3,202.6M184.3,202.6L161.9,177.2M184.3,202.6L200.3,200.2M200.3,200.2L178.4,189.7M200.3,200.2L206.6,203.4M214.5,206.9L194,187.2M217.9,208.5L243.1,206.1M243.1,206.1L220.7,183.4M243.1,206.1L269.8,197.3M269.8,197.3L247.4,173M269.8,197.3L296.5,185.4M296.5,185.4L274.2,161M296.5,185.4L323.2,167.3M323.2,167.3L300.9,150.2M323.2,167.3L376.7,149.3M376.7,149.3L354.3,132.5M376.7,149.3L430.1,114.4M430.1,114.4L407.8,98.3M430.1,114.4L526.3,55.6M526.3,55.6L504,45.2M103.2,201.4L80.8,190.1M103.2,201.4L110.6,199.7M110.6,199.7L88.3,188.8M110.6,199.7L120.3,197M120.3,197L97.9,187M120.3,197L124.5,188M124.5,188L102.2,177.6M124.5,188L135.2,183.2M135.2,183.2L112.9,172.3M135.2,183.2L151.2,179.4M151.2,179.4L128.9,168.6M151.2,179.4L161.9,177.2M161.9,177.2L139.6,166.3M161.9,177.2L177.6,189.2M177.6,189.2L155.6,170.1M178.5,189.4L194,187.2M194,187.2L171.6,176.7M194,187.2L220.7,183.4M220.7,183.4L198.4,162.4M220.7,183.4L247.4,173M247.4,173L225.1,151.1M247.4,173L274.2,161M274.2,161L251.8,140.5M274.2,161L300.9,150.2M300.9,150.2L278.5,129.5M300.9,150.2L354.3,132.5M354.3,132.5L332,109.4M354.3,132.5L407.8,98.3M407.8,98.3L385.4,79.4M407.8,98.3L504,45.2M504,45.2L481.6,34.4M80.8,190.1L58.4,179.5M80.8,190.1L88.3,188.8M88.3,188.8L65.9,178M88.3,188.8L97.9,187M97.9,187L75.6,177.3M97.9,187L102.2,177.6M102.2,177.6L79.8,166.3M102.2,177.6L112.9,172.3M112.9,172.3L90.5,161M112.9,172.3L128.9,168.6M128.9,168.6L106.5,157.2M128.9,168.6L139.6,166.3M139.6,166.3L117.2,155.3M139.6,166.3L155.6,170.1M155.6,170.1L147.7,168.7M146.2,168.5L145.7,168.4M155.6,170.1L171.6,176.7M171.6,176.7L149.3,166.9M171.6,176.7L198.4,162.4M198.4,162.4L176,158.5M198.4,162.4L225.1,151.1M225.1,151.1L202.7,143.2M225.1,151.1L251.8,140.5M251.8,140.5L229.5,130.2M251.8,140.5L278.5,129.5M278.5,129.5L256.2,118.4M278.5,129.5L332,109.4M332,109.4L309.6,94.4M332,109.4L385.4,79.4M385.4,79.4L363.1,72.6M385.4,79.4L481.6,34.4M481.6,34.4L459.2,23.2M58.4,179.5L65.9,178M65.9,178L75.6,177.3M75.6,177.3L79.8,166.3M79.8,166.3L90.5,161M90.5,161L106.5,157.2M106.5,157.2L117.2,155.3M117.2,155.3L121,157.9M141.8,166.6L149.3,166.9M149.3,166.9L176,158.5M176,158.5L202.7,143.2M202.7,143.2L229.5,130.2M229.5,130.2L256.2,118.4M256.2,118.4L309.6,94.4M309.6,94.4L363.1,72.6M363.1,72.6L459.2,23.2"/>
<rect class="d" x="288" y="297"/>
<rect class="d" x="295" y="321"/>
<rect class="d" x="305" y="319"/>
<rect class="d" x="309" y="319"/>
<rect class="d" x="320" y="327"/>
<rect class="d" x="336" y="325"/>
<rect class="d" x="347" y="325"/>
<rect class="d" x="363" y="325"/>
<rect class="d" x="379" y="331"/>
<rect class="d" x="405" y="328"/>
<rect class="d" x="432" y="312"/>
<rect class="d" x="459" y="296"/>
<rect class="d" x="486" y="282"/>
<rect class="d" x="539" y="259"/>
<rect class="d" x="593" y="225"/>
<rect class="d" x="689" y="195"/>
<rect class="d" x="273" y="290"/>
<rect class="d" x="280" y="314"/>
<rect class="d" x="294" y="311"/>
<rect class="d" x="305" y="320"/>
<rect class="d" x="321" y="318"/>
<rect class="d" x="332" y="317"/>
<rect class="d" x="348" y="317"/>
<rect class="d" x="364" y="323"/>
<rect class="d" x="391" y="320"/>
<rect class="d" x="417" y="304"/>
<rect class="d" x="444" y="288"/>
<rect class="d" x="471" y="274"/>
<rect class="d" x="524" y="250"/>
<rect class="d" x="578" y="217"/>
<rect class="d" x="674" y="187"/>
<rect class="d" x="258" y="283"/>
<rect class="d" x="266" y="307"/>
<rect class="d" x="306" y="310"/>
<rect class="d" x="317" y="310"/>
<rect class="d" x="333" y="310"/>
<rect class="d" x="349" y="316"/>
<rect class="d" x="376" y="313"/>
<rect class="d" x="402" y="297"/>
<rect class="d" x="429" y="280"/>
<rect class="d" x="456" y="265"/>
<rect class="d" x="509" y="242"/>
<rect class="d" x="563" y="209"/>
<rect class="d" x="659" y="179"/>
<rect class="d" x="243" y="276"/>
<rect class="d" x="251" y="299"/>
<rect class="d" x="291" y="302"/>
<rect class="d" x="302" y="301"/>
<rect class="d" x="318" y="301"/>
<rect class="d" x="334" y="309"/>
<rect class="d" x="361" y="305"/>
<rect class="d" x="387" y="289"/>
<rect class="d" x="414" y="272"/>
<rect class="d" x="441" y="257"/>
<rect class="d" x="494" y="234"/>
<rect class="d" x="548" y="202"/>
<rect class="d" x="644" y="168"/>
<rect class="d" x="221" y="265"/>
<rect class="d" x="228" y="279"/>
<rect class="d" x="269" y="285"/>
<rect class="d" x="280" y="283"/>
<rect class="d" x="296" y="283"/>
<rect class="d" x="338" y="294"/>
<rect class="d" x="365" y="278"/>
<rect class="d" x="392" y="261"/>
<rect class="d" x="419" y="246"/>
<rect class="d" x="472" y="223"/>
<rect class="d" x="525" y="190"/>
<rect class="d" x="622" y="150"/>
<rect class="d" x="199" y="250"/>
<rect class="d" x="206" y="256"/>
<rect class="d" x="216" y="254"/>
<rect class="d" x="220" y="254"/>
<rect class="d" x="231" y="255"/>
<rect class="d" x="247" y="257"/>
<rect class="d" x="257" y="258"/>
<rect class="d" x="273" y="258"/>
<rect class="d" x="316" y="283"/>
<rect class="d" x="343" y="267"/>
<rect class="d" x="370" y="250"/>
<rect class="d" x="396" y="233"/>
<rect class="d" x="450" y="211"/>
<rect class="d" x="503" y="177"/>
<rect class="d" x="599" y="132"/>
<rect class="d" x="176" y="234"/>
<rect class="d" x="184" y="233"/>
<rect class="d" x="193" y="232"/>
<rect class="d" x="198" y="233"/>
<rect class="d" x="208" y="232"/>
<rect class="d" x="224" y="229"/>
<rect class="d" x="235" y="232"/>
<rect class="d" x="251" y="230"/>
<rect class="d" x="294" y="262"/>
<rect class="d" x="320" y="256"/>
<rect class="d" x="347" y="229"/>
<rect class="d" x="374" y="215"/>
<rect class="d" x="427" y="194"/>
<rect class="d" x="481" y="161"/>
<rect class="d" x="577" y="110"/>
<rect class="d" x="154" y="224"/>
<rect class="d" x="161" y="222"/>
<rect class="d" x="171" y="218"/>
<rect class="d" x="175" y="220"/>
<rect class="d" x="186" y="219"/>
<rect class="d" x="202" y="216"/>
<rect class="d" x="213" y="214"/>
<rect class="d" x="229" y="212"/>
<rect class="d" x="271" y="234"/>
<rect class="d" x="298" y="225"/>
<rect class="d" x="325" y="206"/>
<rect class="d" x="352" y="192"/>
<rect class="d" x="405" y="174"/>
<rect class="d" x="458" y="146"/>
<rect class="d" x="555" y="76"/>
<rect class="d" x="124" y="210"/>
<rect class="d" x="131" y="209"/>
<rect class="d" x="141" y="206"/>
<rect class="d" x="145" y="199"/>
<rect class="d" x="156" y="193"/>
<rect class="d" x="172" y="197"/>
<rect class="d" x="183" y="201"/>
<rect class="d" x="199" y="199"/>
<rect class="d" x="242" y="205"/>
<rect class="d" x="268" y="196"/>
<rect class="d" x="295" y="184"/>
<rect class="d" x="322" y="166"/>
<rect class="d" x="375" y="148"/>
<rect class="d" x="429" y="113"/>
<rect class="d" x="525" y="54"/>
<rect class="d" x="102" y="200"/>
<rect class="d" x="109" y="198"/>
<rect class="d" x="119" y="195"/>
<rect class="d" x="123" y="187"/>
<rect class="d" x="134" y="182"/>
<rect class="d" x="150" y="178"/>
<rect class="d" x="160" y="176"/>
<rect class="d" x="192" y="186"/>
<rect class="d" x="219" y="182"/>
<rect class="d" x="246" y="171"/>
<rect class="d" x="273" y="160"/>
<rect class="d" x="299" y="149"/>
<rect class="d" x="353" y="131"/>
<rect class="d" x="406" y="97"/>
<rect class="d" x="502" y="44"/>
<rect class="d" x="79" y="189"/>
<rect class="d" x="87" y="187"/>
<rect class="d" x="96" y="186"/>
<rect class="d" x="101" y="176"/>
<rect class="d" x="111" y="171"/>
<rect class="d" x="127" y="167"/>
<rect class="d" x="138" y="165"/>
<rect class="d" x="154" y="169"/>
<rect class="d" x="170" y="175"/>
<rect class="d" x="197" y="161"/>
<rect class="d" x="224" y="150"/>
<rect class="d" x="250" y="139"/>
<rect class="d" x="277" y="128"/>
<rect class="d" x="330" y="108"/>
<rect class="d" x="384" y="78"/>
<rect class="d" x="480" y="33"/>
<rect class="d" x="57" y="178"/>
<rect class="d" x="64" y="176"/>
<rect class="d" x="74" y="176"/>
<rect class="d" x="78" y="165"/>
<rect class="d" x="89" y="159"/>
<rect class="d" x="105" y="156"/>
<rect class="d" x="116" y="154"/>
<rect class="d" x="148" y="165"/>
<rect class="d" x="175" y="157"/>
<rect class="d" x="201" y="142"/>
<rect class="d" x="228" y="129"/>
<rect class="d" x="255" y="117"/>
<rect class="d" x="308" y="93"/>
<rect class="d" x="362" y="71"/>
<rect class="d" x="458" y="22"/></g>
<rect class="d" x="288" y="347"/>
<text class="t" text-anchor="end" transform="translate(279.4,360.2) rotate(-9.05)">0</text>
<rect class="d" x="273" y="340"/>
<text class="t" text-anchor="end" transform="translate(264.5,353.1) rotate(-9.05)">4</text>
<rect class="d" x="258" y="333"/>
<text class="t" text-anchor="end" transform="translate(249.6,346) rotate(-9.05)">8</text>
<rect class="d" x="243" y="325"/>
<text class="t" text-anchor="end" transform="translate(234.7,338.9) rotate(-9.05)">12</text>
<rect class="d" x="221" y="315"/>
<text class="t" text-anchor="end" transform="translate(212.4,328.3) rotate(-9.05)">18</text>
<rect class="d" x="199" y="304"/>
<text class="t" text-anchor="end" transform="translate(190,317.6) rotate(-9.05)">24</text>
<rect class="d" x="176" y="293"/>
<text class="t" text-anchor="end" transform="translate(167.7,306.9) rotate(-9.05)">30</text>
<rect class="d" x="154" y="283"/>
<text class="t" text-anchor="end" transform="translate(145.3,296.3) rotate(-9.05)">36</text>
<rect class="d" x="124" y="269"/>
<text class="t" text-anchor="end" transform="translate(115.5,282.1) rotate(-9.05)">44</text>
<rect class="d" x="102" y="258"/>
<text class="t" text-anchor="end" transform="translate(93.2,271.4) rotate(-9.05)">50</text>
<rect class="d" x="79" y="247"/>
<text class="t" text-anchor="end" transform="translate(70.8,260.7) rotate(-9.05)">56</text>
<rect class="d" x="57" y="237"/>
<text class="t" text-anchor="end" transform="translate(48.4,250.1) rotate(-9.05)">62</text>
<rect class="d" x="288" y="347"/>
<text class="t" transform="translate(295.9,360.8) rotate(25.4)">650</text>
<rect class="d" x="295" y="346"/>
<text class="t" transform="translate(303.4,359.6) rotate(25.4)">720</text>
<rect class="d" x="305" y="344"/>
<text class="t" transform="translate(313,358) rotate(25.4)">810</text>
<rect class="d" x="309" y="343"/>
<text class="t" transform="translate(317.3,357.4) rotate(25.4)">850</text>
<rect class="d" x="320" y="342"/>
<text class="t" transform="translate(328,355.6) rotate(25.4)">950</text>
<rect class="d" x="336" y="339"/>
<text class="t" transform="translate(344,353.1) rotate(25.4)">1100</text>
<rect class="d" x="347" y="337"/>
<text class="t" transform="translate(354.7,351.4) rotate(25.4)">1200</text>
<rect class="d" x="363" y="335"/>
<text class="t" transform="translate(370.7,348.9) rotate(25.4)">1350</text>
<rect class="d" x="379" y="332"/>
<text class="t" transform="translate(386.7,346.3) rotate(25.4)">1500</text>
<rect class="d" x="405" y="328"/>
<text class="t" transform="translate(413.5,342.1) rotate(25.4)">1750</text>
<rect class="d" x="432" y="324"/>
<text class="t" transform="translate(440.2,337.8) rotate(25.4)">2000</text>
<rect class="d" x="459" y="320"/>
<text class="t" transform="translate(466.9,333.6) rotate(25.4)">2250</text>
<rect class="d" x="486" y="315"/>
<text class="t" transform="translate(493.6,329.3) rotate(25.4)">2500</text>
<rect class="d" x="539" y="307"/>
<text class="t" transform="translate(547.1,320.8) rotate(25.4)">3000</text>
<rect class="d" x="593" y="298"/>
<text class="t" transform="translate(600.5,312.3) rotate(25.4)">3500</text>
<rect class="d" x="689" y="283"/>
<text class="t" transform="translate(696.7,297) rotate(25.4)">4400</text>
<text class="t" transform="translate(85.5,300.5) rotate(25.4)">IQ (mg)</text>
<text class="t" transform="translate(401.5,373.5) rotate(-9.05)">RPM (RPM)</text>
<rect x="0" y="27" width="59" height="16" fill="#000"/>
<text class="t" text-anchor="end" x="58" y="39">130,30</text>
</svg>
<div class="a" style="left:-5px;top:426px;width:772px;height:439px;background:#d9e5f2;border:1px solid #5f5f5f;"></div>
<div class="a" style="left:-4px;top:427px;width:770px;height:31px;background:linear-gradient(#bccadb,#cfdbe9 50%,#dde8f4);"></div>
<div class="a" style="left:3px;top:457px;width:756px;height:400px;background:#fff;border-top:1px solid #9a9a9a;border-left:1px solid #9a9a9a;"></div>
<div class="a" style="left:4px;top:458px;width:754px;height:398px;background:#e8e8e8;border-top:1px solid #6a6a6a;border-left:1px solid #6a6a6a;"></div>
<div class="a" style="left:5px;top:459px;width:736px;height:380px;background:#000;"></div>
<svg style="left:5px;top:437px" width="17" height="17" viewBox="0 0 17 17" shape-rendering="crispEdges"><path d="M0.5 0.5H12.5V13.5H9.5V14.5H7.5V13.5H5.5V14.5H3.5V15.5H1.5V14.5H0.5Z" fill="#fff" stroke="#000"/><path d="M13 2V11M14 3V10M12 12H10M4 16H3M13 11v1" stroke="#0a7a1a" fill="none"/><path d="M13 12h2v2h-2z" fill="#1a6a8a"/><path d="M1 2.5H5M3 2.5V5.5M1 5.5H5 M8 2.5H12M10 2.5V5.5M8 5.5H12" stroke="#e00000" fill="none"/><path d="M6.5 2L8 4L6.5 6L5 4Z" stroke="#e00000" fill="none"/><path d="M3 8.5H11" stroke="#16a020"/><path d="M3 10.5H11" stroke="#16a020"/></svg>
<div class="tt" style="left:25px;top:439px;color:#9a9a9e;transform:scaleX(0.9759)">Audi Q7 (Audi q7 mod), 383723, Avance 4 *</div>
<div class="a" style="left:657px;top:436px;width:32px;height:18px;border:1px solid #8f9fbc;border-radius:3px;background:linear-gradient(#c5d3e3,#cfdcea);box-shadow:inset 0 0 0 1px rgba(255,255,255,.45)"></div>
<svg style="left:657px;top:436px" width="32" height="18" viewBox="0 0 32 18"><rect x="10.5" y="8.5" width="11" height="4" rx="1" fill="#fff" stroke="#4a4a58"/></svg>
<div class="a" style="left:691px;top:436px;width:32px;height:18px;border:1px solid #8f9fbc;border-radius:3px;background:linear-gradient(#c5d3e3,#cfdcea);box-shadow:inset 0 0 0 1px rgba(255,255,255,.45)"></div>
<svg style="left:691px;top:436px" width="32" height="18" viewBox="0 0 32 18"><rect x="10.5" y="4.5" width="11" height="8" rx="1" fill="#fff" stroke="#4a4a58"/><rect x="13.5" y="7.5" width="5" height="2.4" fill="#8ea4c4" stroke="#4a4a58" stroke-width=".9"/></svg>
<div class="a" style="left:725px;top:436px;width:32px;height:18px;border:1px solid #8f9fbc;border-radius:3px;background:linear-gradient(#c5d3e3,#cfdcea);box-shadow:inset 0 0 0 1px rgba(255,255,255,.45)"></div>
<svg style="left:725px;top:436px" width="32" height="18" viewBox="0 0 32 18"><path d="M11 4.5h3.2l1.8 2.4 1.8-2.4H21l-3.3 4 3.3 4h-3.2L16 10.1l-1.8 2.4H11l3.3-4z" fill="#fff" stroke="#4a4a58" stroke-width="1"/></svg>
<div class="a" style="left:741px;top:459px;width:16px;height:380px;background:#f0f0f0;"></div>
<div class="a" style="left:742px;top:805px;width:14px;height:17px;background:#cdcdcd;"></div>
<svg style="left:741px;top:459px" width="16" height="380"><polyline points="4.5,11 8,7.5 11.5,11" fill="none" stroke="#5a5a5a" stroke-width="1.9"/><polyline points="4.5,370 8,373.5 11.5,370" fill="none" stroke="#5a5a5a" stroke-width="1.9"/></svg>
<div class="a" style="left:741px;top:839px;width:16px;height:16px;background:#c2c2c2;"></div>
<div class="a" style="left:5px;top:839px;width:97px;height:16px;background:#808080;"></div>
<div class="a" style="left:102px;top:839px;width:639px;height:16px;background:#f0f0f0;"></div>
<div class="a" style="left:119px;top:840px;width:604px;height:14px;background:#cdcdcd;"></div>
<svg style="left:102px;top:839px" width="639" height="16"><polyline points="10.5,4.5 7.0,8 10.5,11.5" fill="none" stroke="#5a5a5a" stroke-width="1.9"/><polyline points="627.5,4.5 631.0,8 627.5,11.5" fill="none" stroke="#5a5a5a" stroke-width="1.9"/></svg>
<svg style="left:5px;top:838px" width="98" height="17" viewBox="0 -1 98 17"><polygon points="38,1 70.5,1 64,14.5 44.5,14.5" fill="#c0c0c0" stroke="none"/><polyline points="38,1 44.5,14.5 64,14.5 70.5,1" fill="none" stroke="#000" stroke-width="1.1"/><polygon points="0,1 45,1 38.5,14.5 6.5,14.5" fill="#c0c0c0" stroke="none"/><polyline points="0,1 6.5,14.5 38.5,14.5 45,1" fill="none" stroke="#000" stroke-width="1.1"/><polygon points="64,0 97,0 90,14.5 70.5,14.5" fill="#fff" stroke="none"/><polyline points="64,0 70.5,14.5 90,14.5 97,0" fill="none" stroke="#000" stroke-width="1.1"/><path d="M6.5 13.5h6" stroke="#000" stroke-width="1"/></svg>
<div class="tab" style="left:10px;top:840px">Text</div>
<div class="tab" style="left:52px;top:840px">2d</div>
<div class="tab" style="left:78px;top:840px">3d</div>
<svg style="left:5px;top:459px" width="736" height="380" viewBox="5 459 736 380" shape-rendering="crispEdges" text-rendering="geometricPrecision">
<g fill="none" stroke-width="1"><line x1="85.2" y1="672.8" x2="85.2" y2="348.3" stroke="#356b38" stroke-dasharray="3 3"/>
<line x1="111.9" y1="668.6" x2="111.9" y2="344.1" stroke="#356b38" stroke-dasharray="3 3"/>
<line x1="138.6" y1="664.3" x2="138.6" y2="339.8" stroke="#356b38" stroke-dasharray="3 3"/>
<line x1="165.3" y1="660.1" x2="165.3" y2="335.6" stroke="#356b38" stroke-dasharray="3 3"/>
<line x1="192.1" y1="655.8" x2="192.1" y2="331.3" stroke="#356b38" stroke-dasharray="3 3"/>
<line x1="218.8" y1="651.6" x2="218.8" y2="327.1" stroke="#356b38" stroke-dasharray="3 3"/>
<line x1="245.5" y1="647.3" x2="245.5" y2="322.8" stroke="#356b38" stroke-dasharray="3 3"/>
<line x1="272.2" y1="643.1" x2="272.2" y2="318.6" stroke="#356b38" stroke-dasharray="3 3"/>
<line x1="298.9" y1="638.8" x2="298.9" y2="314.3" stroke="#356b38" stroke-dasharray="3 3"/>
<line x1="325.6" y1="634.6" x2="325.6" y2="310.1" stroke="#356b38" stroke-dasharray="3 3"/>
<line x1="352.4" y1="630.3" x2="352.4" y2="305.8" stroke="#356b38" stroke-dasharray="3 3"/>
<line x1="379.1" y1="626.1" x2="379.1" y2="301.6" stroke="#356b38" stroke-dasharray="3 3"/>
<line x1="405.8" y1="621.8" x2="405.8" y2="297.3" stroke="#356b38" stroke-dasharray="3 3"/>
<line x1="432.5" y1="617.6" x2="432.5" y2="293.1" stroke="#356b38" stroke-dasharray="3 3"/>
<line x1="669.2" y1="713.5" x2="669.2" y2="389" stroke="#356b38" stroke-dasharray="3 3"/>
<line x1="648.2" y1="703.5" x2="648.2" y2="379" stroke="#356b38" stroke-dasharray="3 3"/>
<line x1="627.2" y1="693.5" x2="627.2" y2="369" stroke="#356b38" stroke-dasharray="3 3"/>
<line x1="606.2" y1="683.4" x2="606.2" y2="358.9" stroke="#356b38" stroke-dasharray="3 3"/>
<line x1="585.2" y1="673.4" x2="585.2" y2="348.9" stroke="#356b38" stroke-dasharray="3 3"/>
<line x1="564.2" y1="663.4" x2="564.2" y2="338.9" stroke="#356b38" stroke-dasharray="3 3"/>
<line x1="543.2" y1="653.4" x2="543.2" y2="328.9" stroke="#356b38" stroke-dasharray="3 3"/>
<line x1="522.2" y1="643.4" x2="522.2" y2="318.9" stroke="#356b38" stroke-dasharray="3 3"/>
<line x1="501.2" y1="633.4" x2="501.2" y2="308.9" stroke="#356b38" stroke-dasharray="3 3"/>
<line x1="480.2" y1="623.3" x2="480.2" y2="298.8" stroke="#356b38" stroke-dasharray="3 3"/>
<line x1="58.4" y1="474.8" x2="459.2" y2="407.3" stroke="#356b38" stroke-dasharray="3 3"/>
<line x1="459.2" y1="407.3" x2="690.2" y2="519" stroke="#356b38" stroke-dasharray="3 3"/>
<line x1="316.1" y1="783" x2="85.2" y2="672.8" stroke="#356b38" stroke-dasharray="3 3"/>
<line x1="342.8" y1="778.8" x2="111.9" y2="668.6" stroke="#356b38" stroke-dasharray="3 3"/>
<line x1="369.6" y1="774.5" x2="138.6" y2="664.3" stroke="#356b38" stroke-dasharray="3 3"/>
<line x1="396.3" y1="770.2" x2="165.3" y2="660.1" stroke="#356b38" stroke-dasharray="3 3"/>
<line x1="423" y1="766" x2="192.1" y2="655.8" stroke="#356b38" stroke-dasharray="3 3"/>
<line x1="449.7" y1="761.8" x2="218.8" y2="651.6" stroke="#356b38" stroke-dasharray="3 3"/>
<line x1="476.4" y1="757.5" x2="245.5" y2="647.3" stroke="#356b38" stroke-dasharray="3 3"/>
<line x1="503.2" y1="753.2" x2="272.2" y2="643.1" stroke="#356b38" stroke-dasharray="3 3"/>
<line x1="529.9" y1="749" x2="298.9" y2="638.8" stroke="#356b38" stroke-dasharray="3 3"/>
<line x1="556.6" y1="744.8" x2="325.6" y2="634.6" stroke="#356b38" stroke-dasharray="3 3"/>
<line x1="583.3" y1="740.5" x2="352.4" y2="630.3" stroke="#356b38" stroke-dasharray="3 3"/>
<line x1="610" y1="736.2" x2="379.1" y2="626.1" stroke="#356b38" stroke-dasharray="3 3"/>
<line x1="636.8" y1="732" x2="405.8" y2="621.8" stroke="#356b38" stroke-dasharray="3 3"/>
<line x1="663.5" y1="727.8" x2="432.5" y2="617.6" stroke="#356b38" stroke-dasharray="3 3"/>
<line x1="268.4" y1="777.2" x2="669.2" y2="713.5" stroke="#356b38" stroke-dasharray="3 3"/>
<line x1="247.4" y1="767.2" x2="648.2" y2="703.5" stroke="#356b38" stroke-dasharray="3 3"/>
<line x1="226.4" y1="757.2" x2="627.2" y2="693.5" stroke="#356b38" stroke-dasharray="3 3"/>
<line x1="205.4" y1="747.2" x2="606.2" y2="683.4" stroke="#356b38" stroke-dasharray="3 3"/>
<line x1="184.4" y1="737.2" x2="585.2" y2="673.4" stroke="#356b38" stroke-dasharray="3 3"/>
<line x1="163.4" y1="727.2" x2="564.2" y2="663.4" stroke="#356b38" stroke-dasharray="3 3"/>
<line x1="142.4" y1="717.1" x2="543.2" y2="653.4" stroke="#356b38" stroke-dasharray="3 3"/>
<line x1="121.4" y1="707.1" x2="522.2" y2="643.4" stroke="#356b38" stroke-dasharray="3 3"/>
<line x1="100.4" y1="697.1" x2="501.2" y2="633.4" stroke="#356b38" stroke-dasharray="3 3"/>
<line x1="79.4" y1="687.1" x2="480.2" y2="623.3" stroke="#356b38" stroke-dasharray="3 3"/>
<line x1="289.4" y1="787.2" x2="58.4" y2="677.1" stroke="#5cc868"/>
<line x1="58.4" y1="677.1" x2="459.2" y2="613.3" stroke="#5cc868"/>
<line x1="459.2" y1="613.3" x2="690.2" y2="723.5" stroke="#5cc868"/>
<line x1="690.2" y1="723.5" x2="289.4" y2="787.2" stroke="#5cc868"/>
<line x1="58.4" y1="677.1" x2="58.4" y2="442.6" stroke="#5cc868"/>
<line x1="459.2" y1="613.3" x2="459.2" y2="348.8" stroke="#5cc868"/>
<line x1="690.2" y1="723.5" x2="690.2" y2="439" stroke="#5cc868"/>
<polyline points="690.2,723.5 706,721 705.5,725" fill="none" stroke="#5cc868"/>
<polyline points="692.2,720.5 702,719.5 706,721" fill="none" stroke="#5cc868"/>
<polyline points="58.4,677.1 44,670.2 45.5,667.2 49,668.7" fill="none" stroke="#5cc868"/></g>
<g stroke="#ff0080" stroke-width="1"><path d="M453.5,543.8 432.5,466.5 459.2,462.2 480.2,535.1z" fill="#545454" stroke="#545454" stroke-width=".7"/>
<path d="M426.8,553.1 405.8,470.7 432.5,466.5 453.5,543.8z" fill="#5a5a5a" stroke="#5a5a5a" stroke-width=".7"/>
<path d="M400.1,559.8 379.1,475 405.8,470.7 426.8,553.1z" fill="#5c5c5c" stroke="#5c5c5c" stroke-width=".7"/>
<path d="M373.4,565.1 352.4,486.7 379.1,475 400.1,559.8z" fill="#5e5e5e" stroke="#5e5e5e" stroke-width=".7"/>
<path d="M346.6,569.8 325.6,514.4 352.4,486.7 373.4,565.1zM349.5,534 339,500.6 352.4,486.7 362.9,525.9zM336.1,542.1 325.6,514.4 339,500.6 349.5,534zM360,567.5 349.5,534 362.9,525.9 373.4,565.1zM346.6,569.8 336.1,542.1 349.5,534 360,567.5z" fill="#595959" stroke="#595959" stroke-width=".7"/>
<path d="M319.9,575.1 298.9,530.1 325.6,514.4 346.6,569.8zM322.8,547.4 312.3,522.3 325.6,514.4 336.1,542.1zM309.4,552.6 298.9,530.1 312.3,522.3 322.8,547.4zM333.3,572.5 322.8,547.4 336.1,542.1 346.6,569.8zM319.9,575.1 309.4,552.6 322.8,547.4 333.3,572.5z" fill="#404040" stroke="#404040" stroke-width=".7"/>
<path d="M293.2,580.3 272.2,541.4 298.9,530.1 319.9,575.1z" fill="#343434" stroke="#343434" stroke-width=".7"/>
<path d="M266.5,553.1 245.5,553.6 272.2,541.4 293.2,580.3zM270.8,551.7 265.5,544.5 272.2,541.4 277.5,551.1zM264.1,552.3 258.9,547.5 265.5,544.5 270.8,551.7zM257.4,552.9 252.2,550.6 258.9,547.5 264.1,552.3zM250.7,553.5 245.5,553.6 252.2,550.6 257.4,552.9zM276,559 270.8,551.7 277.5,551.1 282.7,560.9zM269.3,557.1 264.1,552.3 270.8,551.7 276,559zM262.7,555.2 257.4,552.9 264.1,552.3 269.3,557.1zM256,553.4 250.7,553.5 257.4,552.9 262.7,555.2zM281.3,566.2 276,559 282.7,560.9 288,570.6zM274.6,561.9 269.3,557.1 276,559 281.3,566.2zM267.9,557.6 262.7,555.2 269.3,557.1 274.6,561.9zM261.2,553.2 256,553.4 262.7,555.2 267.9,557.6zM286.5,573.5 281.3,566.2 288,570.6 293.2,580.3zM279.8,566.7 274.6,561.9 281.3,566.2 286.5,573.5zM273.2,559.9 267.9,557.6 274.6,561.9 279.8,566.7zM266.5,553.1 261.2,553.2 267.9,557.6 273.2,559.9z" fill="#282828" stroke="#282828" stroke-width=".7"/>
<path d="M239.8,561.4 218.8,561.4 245.5,553.6 266.5,553.1z" fill="#191919" stroke="#191919" stroke-width=".7"/>
<path d="M213,577.1 192.1,567.1 218.8,561.4 239.8,561.4zM215.9,566.8 205.4,564.2 218.8,561.4 229.3,561.4zM202.5,572.1 192.1,567.1 205.4,564.2 215.9,566.8zM226.4,569.3 215.9,566.8 229.3,561.4 239.8,561.4zM213,577.1 202.5,572.1 215.9,566.8 226.4,569.3z" fill="#171717" stroke="#171717" stroke-width=".7"/>
<path d="M186.3,588.9 165.3,572.3 192.1,567.1 213,577.1z" fill="#181818" stroke="#181818" stroke-width=".7"/>
<path d="M159.6,605.5 138.6,545.7 165.3,572.3 186.3,588.9zM163.9,572.5 158.6,565.7 165.3,572.3 170.6,576.5zM157.2,568.6 152,559 158.6,565.7 163.9,572.5zM150.5,564.6 145.3,552.4 152,559 157.2,568.6zM143.9,560.7 138.6,545.7 145.3,552.4 150.5,564.6zM169.1,579.4 163.9,572.5 170.6,576.5 175.8,580.6zM162.5,578.1 157.2,568.6 163.9,572.5 169.1,579.4zM155.8,576.9 150.5,564.6 157.2,568.6 162.5,578.1zM149.1,575.6 143.9,560.7 150.5,564.6 155.8,576.9zM174.4,586.2 169.1,579.4 175.8,580.6 181.1,584.7zM167.7,587.7 162.5,578.1 169.1,579.4 174.4,586.2zM161,589.1 155.8,576.9 162.5,578.1 167.7,587.7zM154.4,590.6 149.1,575.6 155.8,576.9 161,589.1zM179.6,593 174.4,586.2 181.1,584.7 186.3,588.9zM173,597.2 167.7,587.7 174.4,586.2 179.6,593zM166.3,601.4 161,589.1 167.7,587.7 173,597.2zM159.6,605.5 154.4,590.6 161,589.1 166.3,601.4z" fill="#2f2f2f" stroke="#2f2f2f" stroke-width=".7"/>
<path d="M132.9,619.8 111.9,546.5 138.6,545.7 159.6,605.5zM135.7,579.4 125.2,546.1 138.6,545.7 149.1,575.6zM122.4,583.1 111.9,546.5 125.2,546.1 135.7,579.4zM146.2,612.7 135.7,579.4 149.1,575.6 159.6,605.5zM132.9,619.8 122.4,583.1 135.7,579.4 146.2,612.7z" fill="#4d4d4d" stroke="#4d4d4d" stroke-width=".7"/>
<path d="M106.2,630.5 85.2,559.1 111.9,546.5 132.9,619.8z" fill="#585858" stroke="#585858" stroke-width=".7"/>
<path d="M79.4,635.8 58.4,568.4 85.2,559.1 106.2,630.5z" fill="#4f4f4f" stroke="#4f4f4f" stroke-width=".7"/>
<path d="M474.5,587.7 453.5,543.8 480.2,535.1 501.2,582.5z" fill="#363636" stroke="#363636" stroke-width=".7"/>
<path d="M447.8,593 426.8,553.1 453.5,543.8 474.5,587.7z" fill="#333333" stroke="#333333" stroke-width=".7"/>
<path d="M421.1,598.3 400.1,559.8 426.8,553.1 447.8,593z" fill="#2e2e2e" stroke="#2e2e2e" stroke-width=".7"/>
<path d="M394.4,561.7 373.4,565.1 400.1,559.8 421.1,598.3zM398.7,568.1 393.4,561.1 400.1,559.8 405.3,569.4zM392,566.8 386.7,562.4 393.4,561.1 398.7,568.1zM385.3,565.5 380,563.8 386.7,562.4 392,566.8zM378.6,564.2 373.4,565.1 380,563.8 385.3,565.5zM403.9,575.1 398.7,568.1 405.3,569.4 410.6,579.1zM397.2,571.2 392,566.8 398.7,568.1 403.9,575.1zM390.5,567.3 385.3,565.5 392,566.8 397.2,571.2zM383.9,563.4 378.6,564.2 385.3,565.5 390.5,567.3zM409.2,582.2 403.9,575.1 410.6,579.1 415.8,588.7zM402.5,575.6 397.2,571.2 403.9,575.1 409.2,582.2zM395.8,569.1 390.5,567.3 397.2,571.2 402.5,575.6zM389.1,562.5 383.9,563.4 390.5,567.3 395.8,569.1zM414.4,589.2 409.2,582.2 415.8,588.7 421.1,598.3zM407.7,580 402.5,575.6 409.2,582.2 414.4,589.2zM401,570.8 395.8,569.1 402.5,575.6 407.7,580zM394.4,561.7 389.1,562.5 395.8,569.1 401,570.8z" fill="#2c2c2c" stroke="#2c2c2c" stroke-width=".7"/>
<path d="M367.6,565.9 346.6,569.8 373.4,565.1 394.4,561.7z" fill="#1e1e1e" stroke="#1e1e1e" stroke-width=".7"/>
<path d="M340.9,580.1 319.9,575.1 346.6,569.8 367.6,565.9z" fill="#181818" stroke="#181818" stroke-width=".7"/>
<path d="M314.2,591.8 293.2,580.3 319.9,575.1 340.9,580.1z" fill="#151515" stroke="#151515" stroke-width=".7"/>
<path d="M287.5,608.6 266.5,553.1 293.2,580.3 314.2,591.8zM291.8,579.1 286.5,573.5 293.2,580.3 298.5,583.2zM285.1,575.1 279.8,566.7 286.5,573.5 291.8,579.1zM278.4,571 273.2,559.9 279.8,566.7 285.1,575.1zM271.7,567 266.5,553.1 273.2,559.9 278.4,571zM297,584.8 291.8,579.1 298.5,583.2 303.7,586.1zM290.3,583.5 285.1,575.1 291.8,579.1 297,584.8zM283.7,582.2 278.4,571 285.1,575.1 290.3,583.5zM277,580.8 271.7,567 278.4,571 283.7,582.2zM302.3,590.4 297,584.8 303.7,586.1 309,588.9zM295.6,591.8 290.3,583.5 297,584.8 302.3,590.4zM288.9,593.3 283.7,582.2 290.3,583.5 295.6,591.8zM282.2,594.7 277,580.8 283.7,582.2 288.9,593.3zM307.5,596 302.3,590.4 309,588.9 314.2,591.8zM300.8,600.2 295.6,591.8 302.3,590.4 307.5,596zM294.2,604.4 288.9,593.3 295.6,591.8 300.8,600.2zM287.5,608.6 282.2,594.7 288.9,593.3 294.2,604.4z" fill="#2c2c2c" stroke="#2c2c2c" stroke-width=".7"/>
<path d="M260.8,625.2 239.8,561.4 266.5,553.1 287.5,608.6z" fill="#4c4c4c" stroke="#4c4c4c" stroke-width=".7"/>
<path d="M234,637 213,577.1 239.8,561.4 260.8,625.2z" fill="#505050" stroke="#505050" stroke-width=".7"/>
<path d="M207.3,643.2 186.3,588.9 213,577.1 234,637z" fill="#454545" stroke="#454545" stroke-width=".7"/>
<path d="M180.6,648.5 159.6,605.5 186.3,588.9 207.3,643.2zM183.5,621.5 173,597.2 186.3,588.9 196.8,616zM170.1,627 159.6,605.5 173,597.2 183.5,621.5zM194,645.9 183.5,621.5 196.8,616 207.3,643.2zM180.6,648.5 170.1,627 183.5,621.5 194,645.9z" fill="#3f3f3f" stroke="#3f3f3f" stroke-width=".7"/>
<path d="M153.9,653.7 132.9,619.8 159.6,605.5 180.6,648.5zM156.7,631.9 146.2,612.7 159.6,605.5 170.1,627zM143.4,636.8 132.9,619.8 146.2,612.7 156.7,631.9zM167.2,651.1 156.7,631.9 170.1,627 180.6,648.5zM153.9,653.7 143.4,636.8 156.7,631.9 167.2,651.1z" fill="#323232" stroke="#323232" stroke-width=".7"/>
<path d="M127.2,659 106.2,630.5 132.9,619.8 153.9,653.7z" fill="#292929" stroke="#292929" stroke-width=".7"/>
<path d="M100.4,664.3 79.4,635.8 106.2,630.5 127.2,659z" fill="#222222" stroke="#222222" stroke-width=".7"/>
<path d="M495.5,565.4 474.5,587.7 501.2,582.5 522.2,562.2z" fill="#2a2a2a" stroke="#2a2a2a" stroke-width=".7"/>
<path d="M468.8,579.5 447.8,593 474.5,587.7 495.5,565.4z" fill="#232323" stroke="#232323" stroke-width=".7"/>
<path d="M442.1,597.4 421.1,598.3 447.8,593 468.8,579.5zM444.9,592.1 434.4,595.7 447.8,593 458.3,586.3zM431.6,597.8 421.1,598.3 434.4,595.7 444.9,592.1zM455.4,588.5 444.9,592.1 458.3,586.3 468.8,579.5zM442.1,597.4 431.6,597.8 444.9,592.1 455.4,588.5z" fill="#1b1b1b" stroke="#1b1b1b" stroke-width=".7"/>
<path d="M415.4,611.5 394.4,561.7 421.1,598.3 442.1,597.4zM419.6,592.1 414.4,589.2 421.1,598.3 426.3,598.1zM413,586.1 407.7,580 414.4,589.2 419.6,592.1zM406.3,580.1 401,570.8 407.7,580 413,586.1zM399.6,574.1 394.4,561.7 401,570.8 406.3,580.1zM424.9,595 419.6,592.1 426.3,598.1 431.6,597.8zM418.2,592.2 413,586.1 419.6,592.1 424.9,595zM411.5,589.4 406.3,580.1 413,586.1 418.2,592.2zM404.9,586.6 399.6,574.1 406.3,580.1 411.5,589.4zM430.1,598 424.9,595 431.6,597.8 436.8,597.6zM423.5,598.3 418.2,592.2 424.9,595 430.1,598zM416.8,598.7 411.5,589.4 418.2,592.2 423.5,598.3zM410.1,599.1 404.9,586.6 411.5,589.4 416.8,598.7zM435.4,600.9 430.1,598 436.8,597.6 442.1,597.4zM428.7,604.5 423.5,598.3 430.1,598 435.4,600.9zM422,608 416.8,598.7 423.5,598.3 428.7,604.5zM415.4,611.5 410.1,599.1 416.8,598.7 422,608z" fill="#2d2d2d" stroke="#2d2d2d" stroke-width=".7"/>
<path d="M388.6,628.3 367.6,565.9 394.4,561.7 415.4,611.5zM391.5,591.9 381,563.8 394.4,561.7 404.9,586.6zM378.1,597.1 367.6,565.9 381,563.8 391.5,591.9zM402,619.9 391.5,591.9 404.9,586.6 415.4,611.5zM388.6,628.3 378.1,597.1 391.5,591.9 402,619.9z" fill="#464646" stroke="#464646" stroke-width=".7"/>
<path d="M361.9,642.5 340.9,580.1 367.6,565.9 388.6,628.3z" fill="#515151" stroke="#515151" stroke-width=".7"/>
<path d="M335.2,647.2 314.2,591.8 340.9,580.1 361.9,642.5z" fill="#464646" stroke="#464646" stroke-width=".7"/>
<path d="M308.5,652 287.5,608.6 314.2,591.8 335.2,647.2zM311.3,624.9 300.8,600.2 314.2,591.8 324.7,619.5zM298,630.3 287.5,608.6 300.8,600.2 311.3,624.9zM321.8,649.6 311.3,624.9 324.7,619.5 335.2,647.2zM308.5,652 298,630.3 311.3,624.9 321.8,649.6z" fill="#3f3f3f" stroke="#3f3f3f" stroke-width=".7"/>
<path d="M281.8,656.8 260.8,625.2 287.5,608.6 308.5,652zM284.6,635.7 274.1,616.9 287.5,608.6 298,630.3zM271.3,641 260.8,625.2 274.1,616.9 284.6,635.7zM295.1,654.4 284.6,635.7 298,630.3 308.5,652zM281.8,656.8 271.3,641 284.6,635.7 295.1,654.4z" fill="#333333" stroke="#333333" stroke-width=".7"/>
<path d="M255,661.9 234,637 260.8,625.2 281.8,656.8z" fill="#262626" stroke="#262626" stroke-width=".7"/>
<path d="M228.3,667.2 207.3,643.2 234,637 255,661.9z" fill="#1f1f1f" stroke="#1f1f1f" stroke-width=".7"/>
<path d="M201.6,621.8 180.6,648.5 207.3,643.2 228.3,667.2zM205.9,647.4 200.6,644.5 207.3,643.2 212.6,649.2zM199.2,645.5 194,645.9 200.6,644.5 205.9,647.4zM192.5,643.7 187.3,647.2 194,645.9 199.2,645.5zM185.8,641.8 180.6,648.5 187.3,647.2 192.5,643.7zM211.1,650.2 205.9,647.4 212.6,649.2 217.8,655.2zM204.5,645.2 199.2,645.5 205.9,647.4 211.1,650.2zM197.8,640.2 192.5,643.7 199.2,645.5 204.5,645.2zM191.1,635.2 185.8,641.8 192.5,643.7 197.8,640.2zM216.4,653 211.1,650.2 217.8,655.2 223.1,661.2zM209.7,644.9 204.5,645.2 211.1,650.2 216.4,653zM203,636.7 197.8,640.2 204.5,645.2 209.7,644.9zM196.3,628.5 191.1,635.2 197.8,640.2 203,636.7zM221.6,655.9 216.4,653 223.1,661.2 228.3,667.2zM215,644.5 209.7,644.9 216.4,653 221.6,655.9zM208.3,633.2 203,636.7 209.7,644.9 215,644.5zM201.6,621.8 196.3,628.5 203,636.7 208.3,633.2z" fill="#363636" stroke="#363636" stroke-width=".7"/>
<path d="M174.9,623.4 153.9,653.7 180.6,648.5 201.6,621.8z" fill="#303030" stroke="#303030" stroke-width=".7"/>
<path d="M148.2,638 127.2,659 153.9,653.7 174.9,623.4zM151,643.5 140.5,656.3 153.9,653.7 164.4,638.5zM137.7,648.5 127.2,659 140.5,656.3 151,643.5zM161.5,630.7 151,643.5 164.4,638.5 174.9,623.4zM148.2,638 137.7,648.5 151,643.5 161.5,630.7z" fill="#282828" stroke="#282828" stroke-width=".7"/>
<path d="M121.4,655.8 100.4,664.3 127.2,659 148.2,638zM124.3,654.3 113.8,661.6 127.2,659 137.7,648.5zM110.9,660.1 100.4,664.3 113.8,661.6 124.3,654.3zM134.8,646.9 124.3,654.3 137.7,648.5 148.2,638zM121.4,655.8 110.9,660.1 124.3,654.3 134.8,646.9z" fill="#1f1f1f" stroke="#1f1f1f" stroke-width=".7"/>
<path d="M516.5,643.8 495.5,565.4 522.2,562.2 543.2,619.5zM519.4,597.7 508.9,563.8 522.2,562.2 532.7,590.8zM506,604.6 495.5,565.4 508.9,563.8 519.4,597.7zM529.9,631.6 519.4,597.7 532.7,590.8 543.2,619.5zM516.5,643.8 506,604.6 519.4,597.7 529.9,631.6z" fill="#565656" stroke="#565656" stroke-width=".7"/>
<path d="M489.8,648.5 468.8,579.5 495.5,565.4 516.5,643.8zM492.7,609.3 482.2,572.5 495.5,565.4 506,604.6zM479.3,614 468.8,579.5 482.2,572.5 492.7,609.3zM503.2,646.1 492.7,609.3 506,604.6 516.5,643.8zM489.8,648.5 479.3,614 492.7,609.3 503.2,646.1z" fill="#575757" stroke="#575757" stroke-width=".7"/>
<path d="M463.1,653.2 442.1,597.4 468.8,579.5 489.8,648.5zM465.9,619.6 455.4,588.5 468.8,579.5 479.3,614zM452.6,625.3 442.1,597.4 455.4,588.5 465.9,619.6zM476.4,650.8 465.9,619.6 479.3,614 489.8,648.5zM463.1,653.2 452.6,625.3 465.9,619.6 476.4,650.8z" fill="#4d4d4d" stroke="#4d4d4d" stroke-width=".7"/>
<path d="M436.4,657.9 415.4,611.5 442.1,597.4 463.1,653.2zM439.2,630 428.7,604.5 442.1,597.4 452.6,625.3zM425.9,634.7 415.4,611.5 428.7,604.5 439.2,630zM449.7,655.6 439.2,630 452.6,625.3 463.1,653.2zM436.4,657.9 425.9,634.7 439.2,630 449.7,655.6z" fill="#3f3f3f" stroke="#3f3f3f" stroke-width=".7"/>
<path d="M409.6,662.8 388.6,628.3 415.4,611.5 436.4,657.9zM412.5,640.1 402,619.9 415.4,611.5 425.9,634.7zM399.1,645.5 388.6,628.3 402,619.9 412.5,640.1zM423,660.3 412.5,640.1 425.9,634.7 436.4,657.9zM409.6,662.8 399.1,645.5 412.5,640.1 423,660.3z" fill="#363636" stroke="#363636" stroke-width=".7"/>
<path d="M382.9,667.5 361.9,642.5 388.6,628.3 409.6,662.8zM385.8,650.3 375.3,635.4 388.6,628.3 399.1,645.5zM372.4,655 361.9,642.5 375.3,635.4 385.8,650.3zM396.3,665.1 385.8,650.3 399.1,645.5 409.6,662.8zM382.9,667.5 372.4,655 385.8,650.3 396.3,665.1z" fill="#292929" stroke="#292929" stroke-width=".7"/>
<path d="M356.2,672.8 335.2,647.2 361.9,642.5 382.9,667.5z" fill="#1e1e1e" stroke="#1e1e1e" stroke-width=".7"/>
<path d="M329.5,626.1 308.5,652 335.2,647.2 356.2,672.8zM333.8,651.6 328.5,648.4 335.2,647.2 340.4,653.6zM327.1,649.6 321.8,649.6 328.5,648.4 333.8,651.6zM320.4,647.6 315.2,650.8 321.8,649.6 327.1,649.6zM313.7,645.5 308.5,652 315.2,650.8 320.4,647.6zM339,654.8 333.8,651.6 340.4,653.6 345.7,660zM332.3,649.5 327.1,649.6 333.8,651.6 339,654.8zM325.7,644.3 320.4,647.6 327.1,649.6 332.3,649.5zM319,639 313.7,645.5 320.4,647.6 325.7,644.3zM344.3,657.9 339,654.8 345.7,660 350.9,666.4zM337.6,649.5 332.3,649.5 339,654.8 344.3,657.9zM330.9,641 325.7,644.3 332.3,649.5 337.6,649.5zM324.2,632.5 319,639 325.7,644.3 330.9,641zM349.5,661.1 344.3,657.9 350.9,666.4 356.2,672.8zM342.8,649.4 337.6,649.5 344.3,657.9 349.5,661.1zM336.2,637.7 330.9,641 337.6,649.5 342.8,649.4zM329.5,626.1 324.2,632.5 330.9,641 336.2,637.7z" fill="#373737" stroke="#373737" stroke-width=".7"/>
<path d="M302.8,622.8 281.8,656.8 308.5,652 329.5,626.1z" fill="#333333" stroke="#333333" stroke-width=".7"/>
<path d="M276,637.1 255,661.9 281.8,656.8 302.8,622.8zM278.9,644.7 268.4,659.4 281.8,656.8 292.3,639.8zM265.5,649.5 255,661.9 268.4,659.4 278.9,644.7zM289.4,630 278.9,644.7 292.3,639.8 302.8,622.8zM276,637.1 265.5,649.5 278.9,644.7 289.4,630z" fill="#2b2b2b" stroke="#2b2b2b" stroke-width=".7"/>
<path d="M249.3,653.8 228.3,667.2 255,661.9 276,637.1zM252.2,655 241.7,664.6 255,661.9 265.5,649.5zM238.8,660.5 228.3,667.2 241.7,664.6 252.2,655zM262.7,645.4 252.2,655 265.5,649.5 276,637.1zM249.3,653.8 238.8,660.5 252.2,655 262.7,645.4z" fill="#232323" stroke="#232323" stroke-width=".7"/>
<path d="M222.6,675.6 201.6,621.8 228.3,667.2 249.3,653.8zM226.9,656.7 221.6,655.9 228.3,667.2 233.6,663.9zM220.2,649.6 215,644.5 221.6,655.9 226.9,656.7zM213.5,642.4 208.3,633.2 215,644.5 220.2,649.6zM206.8,635.2 201.6,621.8 208.3,633.2 213.5,642.4zM232.1,657.5 226.9,656.7 233.6,663.9 238.8,660.5zM225.5,654.6 220.2,649.6 226.9,656.7 232.1,657.5zM218.8,651.6 213.5,642.4 220.2,649.6 225.5,654.6zM212.1,648.7 206.8,635.2 213.5,642.4 218.8,651.6zM237.4,658.4 232.1,657.5 238.8,660.5 244.1,657.1zM230.7,659.6 225.5,654.6 232.1,657.5 237.4,658.4zM224,660.9 218.8,651.6 225.5,654.6 230.7,659.6zM217.3,662.1 212.1,648.7 218.8,651.6 224,660.9zM242.6,659.2 237.4,658.4 244.1,657.1 249.3,653.8zM236,664.7 230.7,659.6 237.4,658.4 242.6,659.2zM229.3,670.1 224,660.9 230.7,659.6 236,664.7zM222.6,675.6 217.3,662.1 224,660.9 229.3,670.1z" fill="#363636" stroke="#363636" stroke-width=".7"/>
<path d="M195.9,697.2 174.9,623.4 201.6,621.8 222.6,675.6zM198.7,654.5 188.2,622.6 201.6,621.8 212.1,648.7zM185.4,660.3 174.9,623.4 188.2,622.6 198.7,654.5zM209.2,686.4 198.7,654.5 212.1,648.7 222.6,675.6zM195.9,697.2 185.4,660.3 198.7,654.5 209.2,686.4z" fill="#4f4f4f" stroke="#4f4f4f" stroke-width=".7"/>
<path d="M169.2,711.4 148.2,638 174.9,623.4 195.9,697.2z" fill="#5d5d5d" stroke="#5d5d5d" stroke-width=".7"/>
<path d="M142.4,716.2 121.4,655.8 148.2,638 169.2,711.4zM145.3,680.4 134.8,646.9 148.2,638 158.7,674.7zM131.9,686 121.4,655.8 134.8,646.9 145.3,680.4zM155.8,713.8 145.3,680.4 158.7,674.7 169.2,711.4zM142.4,716.2 131.9,686 145.3,680.4 155.8,713.8z" fill="#525252" stroke="#525252" stroke-width=".7"/>
<path d="M537.5,667.7 516.5,643.8 543.2,619.5 564.2,663zM540.4,648.5 529.9,631.6 543.2,619.5 553.7,641.2zM527,655.7 516.5,643.8 529.9,631.6 540.4,648.5zM550.9,665.3 540.4,648.5 553.7,641.2 564.2,663zM537.5,667.7 527,655.7 540.4,648.5 550.9,665.3z" fill="#343434" stroke="#343434" stroke-width=".7"/>
<path d="M510.8,671.9 489.8,648.5 516.5,643.8 537.5,667.7z" fill="#1c1c1c" stroke="#1c1c1c" stroke-width=".7"/>
<path d="M484.1,676.2 463.1,653.2 489.8,648.5 510.8,671.9z" fill="#1c1c1c" stroke="#1c1c1c" stroke-width=".7"/>
<path d="M457.3,623.6 436.4,657.9 463.1,653.2 484.1,676.2zM461.6,656.5 456.4,654.4 463.1,653.2 468.3,658.9zM455,654.1 449.7,655.6 456.4,654.4 461.6,656.5zM448.3,651.7 443,656.7 449.7,655.6 455,654.1zM441.6,649.3 436.4,657.9 443,656.7 448.3,651.7zM466.9,658.7 461.6,656.5 468.3,658.9 473.6,664.7zM460.2,652.7 455,654.1 461.6,656.5 466.9,658.7zM453.5,646.7 448.3,651.7 455,654.1 460.2,652.7zM446.8,640.8 441.6,649.3 448.3,651.7 453.5,646.7zM472.1,660.9 466.9,658.7 473.6,664.7 478.8,670.4zM465.5,651.3 460.2,652.7 466.9,658.7 472.1,660.9zM458.8,641.8 453.5,646.7 460.2,652.7 465.5,651.3zM452.1,632.2 446.8,640.8 453.5,646.7 458.8,641.8zM477.4,663 472.1,660.9 478.8,670.4 484.1,676.2zM470.7,649.9 465.5,651.3 472.1,660.9 477.4,663zM464,636.8 458.8,641.8 465.5,651.3 470.7,649.9zM457.3,623.6 452.1,632.2 458.8,641.8 464,636.8z" fill="#3c3c3c" stroke="#3c3c3c" stroke-width=".7"/>
<path d="M430.6,625.9 409.6,662.8 436.4,657.9 457.3,623.6z" fill="#343434" stroke="#343434" stroke-width=".7"/>
<path d="M403.9,630.1 382.9,667.5 409.6,662.8 430.6,625.9z" fill="#353535" stroke="#353535" stroke-width=".7"/>
<path d="M377.2,646.8 356.2,672.8 382.9,667.5 403.9,630.1zM380,654.3 369.6,670.1 382.9,667.5 393.4,648.8zM366.7,659.8 356.2,672.8 369.6,670.1 380,654.3zM390.5,638.5 380,654.3 393.4,648.8 403.9,630.1zM377.2,646.8 366.7,659.8 380,654.3 390.5,638.5z" fill="#2b2b2b" stroke="#2b2b2b" stroke-width=".7"/>
<path d="M350.5,658.5 329.5,626.1 356.2,672.8 377.2,646.8zM354.8,658.2 349.5,661.1 356.2,672.8 361.4,666.3zM348.1,650.2 342.8,649.4 349.5,661.1 354.8,658.2zM341.4,642.2 336.2,637.7 342.8,649.4 348.1,650.2zM334.7,634.2 329.5,626.1 336.2,637.7 341.4,642.2zM360,655.4 354.8,658.2 361.4,666.3 366.7,659.8zM353.3,651 348.1,650.2 354.8,658.2 360,655.4zM346.6,646.7 341.4,642.2 348.1,650.2 353.3,651zM340,642.3 334.7,634.2 341.4,642.2 346.6,646.7zM365.3,652.6 360,655.4 366.7,659.8 371.9,653.3zM358.6,651.8 353.3,651 360,655.4 365.3,652.6zM351.9,651.1 346.6,646.7 353.3,651 358.6,651.8zM345.2,650.4 340,642.3 346.6,646.7 351.9,651.1zM370.5,649.7 365.3,652.6 371.9,653.3 377.2,646.8zM363.8,652.6 358.6,651.8 365.3,652.6 370.5,649.7zM357.1,655.6 351.9,651.1 358.6,651.8 363.8,652.6zM350.5,658.5 345.2,650.4 351.9,651.1 357.1,655.6z" fill="#383838" stroke="#383838" stroke-width=".7"/>
<path d="M323.7,682.8 302.8,622.8 329.5,626.1 350.5,658.5zM326.6,647.5 316.1,624.4 329.5,626.1 340,642.3zM313.2,652.8 302.8,622.8 316.1,624.4 326.6,647.5zM337.1,670.6 326.6,647.5 340,642.3 350.5,658.5zM323.7,682.8 313.2,652.8 326.6,647.5 337.1,670.6z" fill="#3b3b3b" stroke="#3b3b3b" stroke-width=".7"/>
<path d="M297,704.4 276,637.1 302.8,622.8 323.7,682.8z" fill="#575757" stroke="#575757" stroke-width=".7"/>
<path d="M270.3,708.7 249.3,653.8 276,637.1 297,704.4zM273.2,676 262.7,645.4 276,637.1 286.5,670.8zM259.8,681.2 249.3,653.8 262.7,645.4 273.2,676zM283.7,706.5 273.2,676 286.5,670.8 297,704.4zM270.3,708.7 259.8,681.2 273.2,676 283.7,706.5z" fill="#4b4b4b" stroke="#4b4b4b" stroke-width=".7"/>
<path d="M243.6,713.5 222.6,675.6 249.3,653.8 270.3,708.7zM246.4,687.9 236,664.7 249.3,653.8 259.8,681.2zM233.1,694.5 222.6,675.6 236,664.7 246.4,687.9zM256.9,711.1 246.4,687.9 259.8,681.2 270.3,708.7zM243.6,713.5 233.1,694.5 246.4,687.9 256.9,711.1z" fill="#3f3f3f" stroke="#3f3f3f" stroke-width=".7"/>
<path d="M216.9,717.8 195.9,697.2 222.6,675.6 243.6,713.5zM219.7,701 209.2,686.4 222.6,675.6 233.1,694.5zM206.4,707.5 195.9,697.2 209.2,686.4 219.7,701zM230.2,715.6 219.7,701 233.1,694.5 243.6,713.5zM216.9,717.8 206.4,707.5 219.7,701 230.2,715.6z" fill="#2d2d2d" stroke="#2d2d2d" stroke-width=".7"/>
<path d="M190.1,722.5 169.2,711.4 195.9,697.2 216.9,717.8zM193,712.2 182.5,704.3 195.9,697.2 206.4,707.5zM179.6,716.9 169.2,711.4 182.5,704.3 193,712.2zM203.5,720.1 193,712.2 206.4,707.5 216.9,717.8zM190.1,722.5 179.6,716.9 193,712.2 203.5,720.1z" fill="#1c1c1c" stroke="#1c1c1c" stroke-width=".7"/>
<path d="M163.4,727.2 142.4,716.2 169.2,711.4 190.1,722.5z" fill="#141414" stroke="#141414" stroke-width=".7"/>
<path d="M558.5,610.8 537.5,667.7 564.2,663 585.2,615.1z" fill="#424242" stroke="#424242" stroke-width=".7"/>
<path d="M531.8,623.2 510.8,671.9 537.5,667.7 558.5,610.8z" fill="#3c3c3c" stroke="#3c3c3c" stroke-width=".7"/>
<path d="M505.1,627.4 484.1,676.2 510.8,671.9 531.8,623.2z" fill="#3d3d3d" stroke="#3d3d3d" stroke-width=".7"/>
<path d="M478.3,631.7 457.3,623.6 484.1,676.2 505.1,627.4zM482.6,654.4 477.4,663 484.1,676.2 489.3,664zM476,644.8 470.7,649.9 477.4,663 482.6,654.4zM469.3,635.2 464,636.8 470.7,649.9 476,644.8zM462.6,625.6 457.3,623.6 464,636.8 469.3,635.2zM487.9,645.7 482.6,654.4 489.3,664 494.6,651.8zM481.2,639.7 476,644.8 482.6,654.4 487.9,645.7zM474.5,633.7 469.3,635.2 476,644.8 481.2,639.7zM467.8,627.6 462.6,625.6 469.3,635.2 474.5,633.7zM493.1,637.1 487.9,645.7 494.6,651.8 499.8,639.6zM486.5,634.6 481.2,639.7 487.9,645.7 493.1,637.1zM479.8,632.1 474.5,633.7 481.2,639.7 486.5,634.6zM473.1,629.6 467.8,627.6 474.5,633.7 479.8,632.1zM498.4,628.5 493.1,637.1 499.8,639.6 505.1,627.4zM491.7,629.5 486.5,634.6 493.1,637.1 498.4,628.5zM485,630.6 479.8,632.1 486.5,634.6 491.7,629.5zM478.3,631.7 473.1,629.6 479.8,632.1 485,630.6z" fill="#424242" stroke="#424242" stroke-width=".7"/>
<path d="M451.6,643.4 430.6,625.9 457.3,623.6 478.3,631.7zM454.5,631.1 444,624.8 457.3,623.6 467.8,627.6zM441.1,634.6 430.6,625.9 444,624.8 454.5,631.1zM465,637.5 454.5,631.1 467.8,627.6 478.3,631.7zM451.6,643.4 441.1,634.6 454.5,631.1 465,637.5z" fill="#181818" stroke="#181818" stroke-width=".7"/>
<path d="M424.9,665.1 403.9,630.1 430.6,625.9 451.6,643.4zM427.8,641.1 417.3,628 430.6,625.9 441.1,634.6zM414.4,647.6 403.9,630.1 417.3,628 427.8,641.1zM438.3,654.2 427.8,641.1 441.1,634.6 451.6,643.4zM424.9,665.1 414.4,647.6 427.8,641.1 438.3,654.2z" fill="#2a2a2a" stroke="#2a2a2a" stroke-width=".7"/>
<path d="M398.2,684.3 377.2,646.8 403.9,630.1 424.9,665.1z" fill="#3b3b3b" stroke="#3b3b3b" stroke-width=".7"/>
<path d="M371.5,696 350.5,658.5 377.2,646.8 398.2,684.3z" fill="#343434" stroke="#343434" stroke-width=".7"/>
<path d="M344.7,701.8 323.7,682.8 350.5,658.5 371.5,696zM347.6,684.8 337.1,670.6 350.5,658.5 361,677.3zM334.2,692.3 323.7,682.8 337.1,670.6 347.6,684.8zM358.1,698.9 347.6,684.8 361,677.3 371.5,696zM344.7,701.8 334.2,692.3 347.6,684.8 358.1,698.9z" fill="#2f2f2f" stroke="#2f2f2f" stroke-width=".7"/>
<path d="M318,706.5 297,704.4 323.7,682.8 344.7,701.8zM320.9,698.9 310.4,693.6 323.7,682.8 334.2,692.3zM307.5,705.5 297,704.4 310.4,693.6 320.9,698.9zM331.4,704.1 320.9,698.9 334.2,692.3 344.7,701.8zM318,706.5 307.5,705.5 320.9,698.9 331.4,704.1z" fill="#1f1f1f" stroke="#1f1f1f" stroke-width=".7"/>
<path d="M291.3,711.2 270.3,708.7 297,704.4 318,706.5z" fill="#1a1a1a" stroke="#1a1a1a" stroke-width=".7"/>
<path d="M264.6,650.9 243.6,713.5 270.3,708.7 291.3,711.2zM268.9,706.4 263.6,709.9 270.3,708.7 275.6,709.3zM262.2,703.6 256.9,711.1 263.6,709.9 268.9,706.4zM255.5,700.7 250.3,712.3 256.9,711.1 262.2,703.6zM248.8,697.9 243.6,713.5 250.3,712.3 255.5,700.7zM274.1,703 268.9,706.4 275.6,709.3 280.8,709.9zM267.4,696.1 262.2,703.6 268.9,706.4 274.1,703zM260.8,689.1 255.5,700.7 262.2,703.6 267.4,696.1zM254.1,682.2 248.8,697.9 255.5,700.7 260.8,689.1zM279.4,699.6 274.1,703 280.8,709.9 286.1,710.6zM272.7,688.6 267.4,696.1 274.1,703 279.4,699.6zM266,677.6 260.8,689.1 267.4,696.1 272.7,688.6zM259.3,666.6 254.1,682.2 260.8,689.1 266,677.6zM284.6,696.1 279.4,699.6 286.1,710.6 291.3,711.2zM277.9,681.1 272.7,688.6 279.4,699.6 284.6,696.1zM271.3,666 266,677.6 272.7,688.6 277.9,681.1zM264.6,650.9 259.3,666.6 266,677.6 271.3,666z" fill="#4b4b4b" stroke="#4b4b4b" stroke-width=".7"/>
<path d="M237.9,655.2 216.9,717.8 243.6,713.5 264.6,650.9z" fill="#464646" stroke="#464646" stroke-width=".7"/>
<path d="M211.1,659.4 190.1,722.5 216.9,717.8 237.9,655.2z" fill="#464646" stroke="#464646" stroke-width=".7"/>
<path d="M184.4,678.4 163.4,727.2 190.1,722.5 211.1,659.4zM187.3,696.9 176.8,724.8 190.1,722.5 200.6,690.9zM173.9,702.8 163.4,727.2 176.8,724.8 187.3,696.9zM197.8,668.9 187.3,696.9 200.6,690.9 211.1,659.4zM184.4,678.4 173.9,702.8 187.3,696.9 197.8,668.9z" fill="#3b3b3b" stroke="#3b3b3b" stroke-width=".7"/>
<path d="M579.5,636.4 558.5,610.8 585.2,615.1 606.2,624.7zM582.4,621.8 571.9,613 585.2,615.1 595.7,619.9zM569,623.6 558.5,610.8 571.9,613 582.4,621.8zM592.9,630.5 582.4,621.8 595.7,619.9 606.2,624.7zM579.5,636.4 569,623.6 582.4,621.8 592.9,630.5z" fill="#1b1b1b" stroke="#1b1b1b" stroke-width=".7"/>
<path d="M552.8,655.6 531.8,623.2 558.5,610.8 579.5,636.4z" fill="#313131" stroke="#313131" stroke-width=".7"/>
<path d="M526.1,674.8 505.1,627.4 531.8,623.2 552.8,655.6zM528.9,645.3 518.4,625.3 531.8,623.2 542.3,639.4zM515.6,651.1 505.1,627.4 518.4,625.3 528.9,645.3zM539.4,665.2 528.9,645.3 542.3,639.4 552.8,655.6zM526.1,674.8 515.6,651.1 528.9,645.3 539.4,665.2z" fill="#373737" stroke="#373737" stroke-width=".7"/>
<path d="M499.3,686.6 478.3,631.7 505.1,627.4 526.1,674.8z" fill="#3d3d3d" stroke="#3d3d3d" stroke-width=".7"/>
<path d="M472.6,692.2 451.6,643.4 478.3,631.7 499.3,686.6z" fill="#3f3f3f" stroke="#3f3f3f" stroke-width=".7"/>
<path d="M445.9,697 424.9,665.1 451.6,643.4 472.6,692.2zM448.8,674.4 438.3,654.2 451.6,643.4 462.1,667.8zM435.4,681.1 424.9,665.1 438.3,654.2 448.8,674.4zM459.3,694.6 448.8,674.4 462.1,667.8 472.6,692.2zM445.9,697 435.4,681.1 448.8,674.4 459.3,694.6z" fill="#393939" stroke="#393939" stroke-width=".7"/>
<path d="M419.2,701.8 398.2,684.3 424.9,665.1 445.9,697zM422,687 411.5,674.7 424.9,665.1 435.4,681.1zM408.7,693 398.2,684.3 411.5,674.7 422,687zM432.5,699.4 422,687 435.4,681.1 445.9,697zM419.2,701.8 408.7,693 422,687 432.5,699.4z" fill="#272727" stroke="#272727" stroke-width=".7"/>
<path d="M392.5,643.9 371.5,696 398.2,684.3 419.2,701.8zM396.8,687.2 391.5,687.2 398.2,684.3 403.4,688.6zM390.1,685.8 384.8,690.1 391.5,687.2 396.8,687.2zM383.4,684.4 378.1,693.1 384.8,690.1 390.1,685.8zM376.7,683 371.5,696 378.1,693.1 383.4,684.4zM402,687.3 396.8,687.2 403.4,688.6 408.7,693zM395.3,681.5 390.1,685.8 396.8,687.2 402,687.3zM388.6,675.7 383.4,684.4 390.1,685.8 395.3,681.5zM382,670 376.7,683 383.4,684.4 388.6,675.7zM407.2,687.3 402,687.3 408.7,693 413.9,697.4zM400.6,677.2 395.3,681.5 402,687.3 407.2,687.3zM393.9,667.1 388.6,675.7 395.3,681.5 400.6,677.2zM387.2,657 382,670 388.6,675.7 393.9,667.1zM412.5,687.3 407.2,687.3 413.9,697.4 419.2,701.8zM405.8,672.9 400.6,677.2 407.2,687.3 412.5,687.3zM399.1,658.4 393.9,667.1 400.6,677.2 405.8,672.9zM392.5,643.9 387.2,657 393.9,667.1 399.1,658.4z" fill="#444444" stroke="#444444" stroke-width=".7"/>
<path d="M365.7,648.2 344.7,701.8 371.5,696 392.5,643.9z" fill="#3f3f3f" stroke="#3f3f3f" stroke-width=".7"/>
<path d="M339,652.4 318,706.5 344.7,701.8 365.7,648.2z" fill="#404040" stroke="#404040" stroke-width=".7"/>
<path d="M312.3,671.4 291.3,711.2 318,706.5 339,652.4zM315.2,685.4 304.7,708.8 318,706.5 328.5,679.5zM301.8,691.3 291.3,711.2 304.7,708.8 315.2,685.4zM325.7,661.9 315.2,685.4 328.5,679.5 339,652.4zM312.3,671.4 301.8,691.3 315.2,685.4 325.7,661.9z" fill="#353535" stroke="#353535" stroke-width=".7"/>
<path d="M285.6,675.7 264.6,650.9 291.3,711.2 312.3,671.4zM289.9,690.2 284.6,696.1 291.3,711.2 296.6,701.3zM283.2,679.2 277.9,681.1 284.6,696.1 289.9,690.2zM276.5,668.1 271.3,666 277.9,681.1 283.2,679.2zM269.8,657.1 264.6,650.9 271.3,666 276.5,668.1zM295.1,684.3 289.9,690.2 296.6,701.3 301.8,691.3zM288.4,677.3 283.2,679.2 289.9,690.2 295.1,684.3zM281.8,670.3 276.5,668.1 283.2,679.2 288.4,677.3zM275.1,663.3 269.8,657.1 276.5,668.1 281.8,670.3zM300.4,678.4 295.1,684.3 301.8,691.3 307,681.4zM293.7,675.4 288.4,677.3 295.1,684.3 300.4,678.4zM287,672.5 281.8,670.3 288.4,677.3 293.7,675.4zM280.3,669.5 275.1,663.3 281.8,670.3 287,672.5zM305.6,672.5 300.4,678.4 307,681.4 312.3,671.4zM298.9,673.5 293.7,675.4 300.4,678.4 305.6,672.5zM292.3,674.6 287,672.5 293.7,675.4 298.9,673.5zM285.6,675.7 280.3,669.5 287,672.5 292.3,674.6z" fill="#414141" stroke="#414141" stroke-width=".7"/>
<path d="M258.9,682.4 237.9,655.2 264.6,650.9 285.6,675.7z" fill="#202020" stroke="#202020" stroke-width=".7"/>
<path d="M232.1,704 211.1,659.4 237.9,655.2 258.9,682.4zM235,675.3 224.5,657.3 237.9,655.2 248.4,668.8zM221.6,681.7 211.1,659.4 224.5,657.3 235,675.3zM245.5,693.2 235,675.3 248.4,668.8 258.9,682.4zM232.1,704 221.6,681.7 235,675.3 245.5,693.2z" fill="#343434" stroke="#343434" stroke-width=".7"/>
<path d="M205.4,725.8 184.4,678.4 211.1,659.4 232.1,704z" fill="#484848" stroke="#484848" stroke-width=".7"/>
<path d="M600.5,683.8 579.5,636.4 606.2,624.7 627.2,678.5z" fill="#3d3d3d" stroke="#3d3d3d" stroke-width=".7"/>
<path d="M573.8,688.5 552.8,655.6 579.5,636.4 600.5,683.8zM576.6,666.1 566.1,646 579.5,636.4 590,660.1zM563.3,672.1 552.8,655.6 566.1,646 576.6,666.1zM587.1,686.2 576.6,666.1 590,660.1 600.5,683.8zM573.8,688.5 563.3,672.1 576.6,666.1 587.1,686.2z" fill="#373737" stroke="#373737" stroke-width=".7"/>
<path d="M547.1,693.3 526.1,674.8 552.8,655.6 573.8,688.5zM549.9,678.1 539.4,665.2 552.8,655.6 563.3,672.1zM536.6,684 526.1,674.8 539.4,665.2 549.9,678.1zM560.4,690.9 549.9,678.1 563.3,672.1 573.8,688.5zM547.1,693.3 536.6,684 549.9,678.1 560.4,690.9z" fill="#282828" stroke="#282828" stroke-width=".7"/>
<path d="M520.3,638.7 499.3,686.6 526.1,674.8 547.1,693.3zM524.6,678.2 519.4,677.8 526.1,674.8 531.3,679.4zM517.9,677 512.7,680.7 519.4,677.8 524.6,678.2zM511.3,675.8 506,683.6 512.7,680.7 517.9,677zM504.6,674.6 499.3,686.6 506,683.6 511.3,675.8zM529.9,678.7 524.6,678.2 531.3,679.4 536.6,684zM523.2,673.3 517.9,677 524.6,678.2 529.9,678.7zM516.5,668 511.3,675.8 517.9,677 523.2,673.3zM509.8,662.6 504.6,674.6 511.3,675.8 516.5,668zM535.1,679.2 529.9,678.7 536.6,684 541.8,688.7zM528.4,669.7 523.2,673.3 529.9,678.7 535.1,679.2zM521.8,660.2 516.5,668 523.2,673.3 528.4,669.7zM515.1,650.7 509.8,662.6 516.5,668 521.8,660.2zM540.4,679.6 535.1,679.2 541.8,688.7 547.1,693.3zM533.7,666 528.4,669.7 535.1,679.2 540.4,679.6zM527,652.3 521.8,660.2 528.4,669.7 533.7,666zM520.3,638.7 515.1,650.7 521.8,660.2 527,652.3z" fill="#414141" stroke="#414141" stroke-width=".7"/>
<path d="M493.6,643 472.6,692.2 499.3,686.6 520.3,638.7z" fill="#3c3c3c" stroke="#3c3c3c" stroke-width=".7"/>
<path d="M466.9,647.2 445.9,697 472.6,692.2 493.6,643z" fill="#3d3d3d" stroke="#3d3d3d" stroke-width=".7"/>
<path d="M440.2,652.5 419.2,701.8 445.9,697 466.9,647.2z" fill="#3c3c3c" stroke="#3c3c3c" stroke-width=".7"/>
<path d="M413.5,668.7 392.5,643.9 419.2,701.8 440.2,652.5zM417.7,679.6 412.5,687.3 419.2,701.8 424.4,689.5zM411.1,669.8 405.8,672.9 412.5,687.3 417.7,679.6zM404.4,660 399.1,658.4 405.8,672.9 411.1,669.8zM397.7,650.1 392.5,643.9 399.1,658.4 404.4,660zM423,671.9 417.7,679.6 424.4,689.5 429.7,677.1zM416.3,666.7 411.1,669.8 417.7,679.6 423,671.9zM409.6,661.5 404.4,660 411.1,669.8 416.3,666.7zM403,656.3 397.7,650.1 404.4,660 409.6,661.5zM428.2,664.2 423,671.9 429.7,677.1 434.9,664.8zM421.6,663.7 416.3,666.7 423,671.9 428.2,664.2zM414.9,663.1 409.6,661.5 416.3,666.7 421.6,663.7zM408.2,662.5 403,656.3 409.6,661.5 414.9,663.1zM433.5,656.6 428.2,664.2 434.9,664.8 440.2,652.5zM426.8,660.6 421.6,663.7 428.2,664.2 433.5,656.6zM420.1,664.6 414.9,663.1 421.6,663.7 426.8,660.6zM413.5,668.7 408.2,662.5 414.9,663.1 420.1,664.6z" fill="#444444" stroke="#444444" stroke-width=".7"/>
<path d="M386.7,675.4 365.7,648.2 392.5,643.9 413.5,668.7z" fill="#202020" stroke="#202020" stroke-width=".7"/>
<path d="M360,692.2 339,652.4 365.7,648.2 386.7,675.4zM362.9,667 352.4,650.3 365.7,648.2 376.2,661.8zM349.5,672.3 339,652.4 352.4,650.3 362.9,667zM373.4,683.8 362.9,667 376.2,661.8 386.7,675.4zM360,692.2 349.5,672.3 362.9,667 373.4,683.8z" fill="#2e2e2e" stroke="#2e2e2e" stroke-width=".7"/>
<path d="M333.3,713.8 312.3,671.4 339,652.4 360,692.2z" fill="#434343" stroke="#434343" stroke-width=".7"/>
<path d="M306.6,730.6 285.6,675.7 312.3,671.4 333.3,713.8zM309.4,697.9 298.9,673.5 312.3,671.4 322.8,692.6zM296.1,703.1 285.6,675.7 298.9,673.5 309.4,697.9zM319.9,722.2 309.4,697.9 322.8,692.6 333.3,713.8zM306.6,730.6 296.1,703.1 309.4,697.9 319.9,722.2z" fill="#3e3e3e" stroke="#3e3e3e" stroke-width=".7"/>
<path d="M279.9,734.8 258.9,682.4 285.6,675.7 306.6,730.6z" fill="#3d3d3d" stroke="#3d3d3d" stroke-width=".7"/>
<path d="M253.1,739.1 232.1,704 258.9,682.4 279.9,734.8zM256,715.1 245.5,693.2 258.9,682.4 269.4,708.6zM242.6,721.6 232.1,704 245.5,693.2 256,715.1zM266.5,737 256,715.1 269.4,708.6 279.9,734.8zM253.1,739.1 242.6,721.6 256,715.1 266.5,737z" fill="#3c3c3c" stroke="#3c3c3c" stroke-width=".7"/>
<path d="M226.4,743.3 205.4,725.8 232.1,704 253.1,739.1zM229.3,728.1 218.8,714.9 232.1,704 242.6,721.6zM215.9,734.6 205.4,725.8 218.8,714.9 229.3,728.1zM239.8,741.2 229.3,728.1 242.6,721.6 253.1,739.1zM226.4,743.3 215.9,734.6 229.3,728.1 239.8,741.2z" fill="#2a2a2a" stroke="#2a2a2a" stroke-width=".7"/>
<path d="M621.5,639.1 600.5,683.8 627.2,678.5 648.2,634.9z" fill="#393939" stroke="#393939" stroke-width=".7"/>
<path d="M594.8,643.4 573.8,688.5 600.5,683.8 621.5,639.1z" fill="#3a3a3a" stroke="#3a3a3a" stroke-width=".7"/>
<path d="M568,649.2 547.1,693.3 573.8,688.5 594.8,643.4z" fill="#393939" stroke="#393939" stroke-width=".7"/>
<path d="M541.3,661.7 520.3,638.7 547.1,693.3 568,649.2zM545.6,672.8 540.4,679.6 547.1,693.3 552.3,682.2zM538.9,663.3 533.7,666 540.4,679.6 545.6,672.8zM532.3,653.9 527,652.3 533.7,666 538.9,663.3zM525.6,644.5 520.3,638.7 527,652.3 532.3,653.9zM550.9,666 545.6,672.8 552.3,682.2 557.6,671.2zM544.2,660.7 538.9,663.3 545.6,672.8 550.9,666zM537.5,655.5 532.3,653.9 538.9,663.3 544.2,660.7zM530.8,650.2 525.6,644.5 532.3,653.9 537.5,655.5zM556.1,659.1 550.9,666 557.6,671.2 562.8,660.2zM549.4,658.1 544.2,660.7 550.9,666 556.1,659.1zM542.8,657 537.5,655.5 544.2,660.7 549.4,658.1zM536.1,656 530.8,650.2 537.5,655.5 542.8,657zM561.4,652.3 556.1,659.1 562.8,660.2 568,649.2zM554.7,655.4 549.4,658.1 556.1,659.1 561.4,652.3zM548,658.6 542.8,657 549.4,658.1 554.7,655.4zM541.3,661.7 536.1,656 542.8,657 548,658.6z" fill="#414141" stroke="#414141" stroke-width=".7"/>
<path d="M514.6,668.4 493.6,643 520.3,638.7 541.3,661.7z" fill="#1e1e1e" stroke="#1e1e1e" stroke-width=".7"/>
<path d="M487.9,682.6 466.9,647.2 493.6,643 514.6,668.4zM490.8,660.3 480.3,645.1 493.6,643 504.1,655.7zM477.4,664.9 466.9,647.2 480.3,645.1 490.8,660.3zM501.2,675.5 490.8,660.3 504.1,655.7 514.6,668.4zM487.9,682.6 477.4,664.9 490.8,660.3 501.2,675.5z" fill="#292929" stroke="#292929" stroke-width=".7"/>
<path d="M461.2,699.4 440.2,652.5 466.9,647.2 487.9,682.6zM464,670.4 453.5,649.9 466.9,647.2 477.4,664.9zM450.7,675.9 440.2,652.5 453.5,649.9 464,670.4zM474.5,691 464,670.4 477.4,664.9 487.9,682.6zM461.2,699.4 450.7,675.9 464,670.4 474.5,691z" fill="#373737" stroke="#373737" stroke-width=".7"/>
<path d="M434.4,713.5 413.5,668.7 440.2,652.5 461.2,699.4z" fill="#414141" stroke="#414141" stroke-width=".7"/>
<path d="M407.7,717.8 386.7,675.4 413.5,668.7 434.4,713.5z" fill="#323232" stroke="#323232" stroke-width=".7"/>
<path d="M381,722 360,692.2 386.7,675.4 407.7,717.8zM383.9,701.8 373.4,683.8 386.7,675.4 397.2,696.6zM370.5,707.1 360,692.2 373.4,683.8 383.9,701.8zM394.4,719.9 383.9,701.8 397.2,696.6 407.7,717.8zM381,722 370.5,707.1 383.9,701.8 394.4,719.9z" fill="#313131" stroke="#313131" stroke-width=".7"/>
<path d="M354.3,726.3 333.3,713.8 360,692.2 381,722zM357.2,713.6 346.7,703 360,692.2 370.5,707.1zM343.8,720.1 333.3,713.8 346.7,703 357.2,713.6zM367.6,724.2 357.2,713.6 370.5,707.1 381,722zM354.3,726.3 343.8,720.1 357.2,713.6 367.6,724.2z" fill="#252525" stroke="#252525" stroke-width=".7"/>
<path d="M327.6,695.7 306.6,730.6 333.3,713.8 354.3,726.3zM331.9,718.2 326.6,718 333.3,713.8 338.5,716.9zM325.2,719.4 319.9,722.2 326.6,718 331.9,718.2zM318.5,720.6 313.3,726.4 319.9,722.2 325.2,719.4zM311.8,721.9 306.6,730.6 313.3,726.4 318.5,720.6zM337.1,718.3 331.9,718.2 338.5,716.9 343.8,720.1zM330.4,716.6 325.2,719.4 331.9,718.2 337.1,718.3zM323.8,714.9 318.5,720.6 325.2,719.4 330.4,716.6zM317.1,713.1 311.8,721.9 318.5,720.6 323.8,714.9zM342.4,718.5 337.1,718.3 343.8,720.1 349,723.2zM335.7,713.8 330.4,716.6 337.1,718.3 342.4,718.5zM329,709.1 323.8,714.9 330.4,716.6 335.7,713.8zM322.3,704.4 317.1,713.1 323.8,714.9 329,709.1zM347.6,718.6 342.4,718.5 349,723.2 354.3,726.3zM340.9,711 335.7,713.8 342.4,718.5 347.6,718.6zM334.2,703.3 329,709.1 335.7,713.8 340.9,711zM327.6,695.7 322.3,704.4 329,709.1 334.2,703.3z" fill="#333333" stroke="#333333" stroke-width=".7"/>
<path d="M300.8,698.9 279.9,734.8 306.6,730.6 327.6,695.7z" fill="#343434" stroke="#343434" stroke-width=".7"/>
<path d="M274.1,701.7 253.1,739.1 279.9,734.8 300.8,698.9z" fill="#353535" stroke="#353535" stroke-width=".7"/>
<path d="M247.4,706.1 226.4,743.3 253.1,739.1 274.1,701.7z" fill="#353535" stroke="#353535" stroke-width=".7"/>
<path d="M642.5,659 621.5,639.1 648.2,634.9 669.2,652.1z" fill="#181818" stroke="#181818" stroke-width=".7"/>
<path d="M615.8,675.6 594.8,643.4 621.5,639.1 642.5,659zM618.6,654.3 608.1,641.3 621.5,639.1 632,649.1zM605.3,659.5 594.8,643.4 608.1,641.3 618.6,654.3zM629.1,667.3 618.6,654.3 632,649.1 642.5,659zM615.8,675.6 605.3,659.5 618.6,654.3 629.1,667.3z" fill="#262626" stroke="#262626" stroke-width=".7"/>
<path d="M589,692.4 568,649.2 594.8,643.4 615.8,675.6zM591.9,665.1 581.4,646.3 594.8,643.4 605.3,659.5zM578.5,670.8 568,649.2 581.4,646.3 591.9,665.1zM602.4,684 591.9,665.1 605.3,659.5 615.8,675.6zM589,692.4 578.5,670.8 591.9,665.1 602.4,684z" fill="#343434" stroke="#343434" stroke-width=".7"/>
<path d="M562.3,706.6 541.3,661.7 568,649.2 589,692.4z" fill="#3d3d3d" stroke="#3d3d3d" stroke-width=".7"/>
<path d="M535.6,710.8 514.6,668.4 541.3,661.7 562.3,706.6z" fill="#323232" stroke="#323232" stroke-width=".7"/>
<path d="M508.9,715.1 487.9,682.6 514.6,668.4 535.6,710.8zM511.7,694.2 501.2,675.5 514.6,668.4 525.1,689.6zM498.4,698.8 487.9,682.6 501.2,675.5 511.7,694.2zM522.2,712.9 511.7,694.2 525.1,689.6 535.6,710.8zM508.9,715.1 498.4,698.8 511.7,694.2 522.2,712.9z" fill="#313131" stroke="#313131" stroke-width=".7"/>
<path d="M482.2,719.3 461.2,699.4 487.9,682.6 508.9,715.1zM485,704.1 474.5,691 487.9,682.6 498.4,698.8zM471.7,709.3 461.2,699.4 474.5,691 485,704.1zM495.5,717.2 485,704.1 498.4,698.8 508.9,715.1zM482.2,719.3 471.7,709.3 485,704.1 495.5,717.2z" fill="#272727" stroke="#272727" stroke-width=".7"/>
<path d="M455.4,688.7 434.4,713.5 461.2,699.4 482.2,719.3zM459.7,705.1 454.5,702.9 461.2,699.4 466.4,704.3zM453.1,705.8 447.8,706.4 454.5,702.9 459.7,705.1zM446.4,706.6 441.1,710 447.8,706.4 453.1,705.8zM439.7,707.3 434.4,713.5 441.1,710 446.4,706.6zM465,707.3 459.7,705.1 466.4,704.3 471.7,709.3zM458.3,705.2 453.1,705.8 459.7,705.1 465,707.3zM451.6,703.2 446.4,706.6 453.1,705.8 458.3,705.2zM444.9,701.1 439.7,707.3 446.4,706.6 451.6,703.2zM470.2,709.5 465,707.3 471.7,709.3 476.9,714.3zM463.6,704.6 458.3,705.2 465,707.3 470.2,709.5zM456.9,699.8 451.6,703.2 458.3,705.2 463.6,704.6zM450.2,694.9 444.9,701.1 451.6,703.2 456.9,699.8zM475.5,711.7 470.2,709.5 476.9,714.3 482.2,719.3zM468.8,704 463.6,704.6 470.2,709.5 475.5,711.7zM462.1,696.4 456.9,699.8 463.6,704.6 468.8,704zM455.4,688.7 450.2,694.9 456.9,699.8 462.1,696.4z" fill="#303030" stroke="#303030" stroke-width=".7"/>
<path d="M428.7,693 407.7,717.8 434.4,713.5 455.4,688.7z" fill="#2c2c2c" stroke="#2c2c2c" stroke-width=".7"/>
<path d="M402,697.2 381,722 407.7,717.8 428.7,693z" fill="#2c2c2c" stroke="#2c2c2c" stroke-width=".7"/>
<path d="M375.3,701.5 354.3,726.3 381,722 402,697.2z" fill="#2c2c2c" stroke="#2c2c2c" stroke-width=".7"/>
<path d="M348.6,705.7 327.6,695.7 354.3,726.3 375.3,701.5zM352.9,714.6 347.6,718.6 354.3,726.3 359.5,720.1zM346.2,709.1 340.9,711 347.6,718.6 352.9,714.6zM339.5,703.7 334.2,703.3 340.9,711 346.2,709.1zM332.8,698.2 327.6,695.7 334.2,703.3 339.5,703.7zM358.1,710.6 352.9,714.6 359.5,720.1 364.8,713.9zM351.4,707.3 346.2,709.1 352.9,714.6 358.1,710.6zM344.7,704 339.5,703.7 346.2,709.1 351.4,707.3zM338.1,700.7 332.8,698.2 339.5,703.7 344.7,704zM363.4,706.6 358.1,710.6 364.8,713.9 370,707.7zM356.7,705.4 351.4,707.3 358.1,710.6 363.4,706.6zM350,704.3 344.7,704 351.4,707.3 356.7,705.4zM343.3,703.2 338.1,700.7 344.7,704 350,704.3zM368.6,702.5 363.4,706.6 370,707.7 375.3,701.5zM361.9,703.6 356.7,705.4 363.4,706.6 368.6,702.5zM355.2,704.7 350,704.3 356.7,705.4 361.9,703.6zM348.6,705.7 343.3,703.2 350,704.3 355.2,704.7z" fill="#303030" stroke="#303030" stroke-width=".7"/>
<path d="M321.8,710 300.8,698.9 327.6,695.7 348.6,705.7z" fill="#151515" stroke="#151515" stroke-width=".7"/>
<path d="M295.1,726.6 274.1,701.7 300.8,698.9 321.8,710zM298,709.3 287.5,700.3 300.8,698.9 311.3,704.4zM284.6,714.2 274.1,701.7 287.5,700.3 298,709.3zM308.5,718.3 298,709.3 311.3,704.4 321.8,710zM295.1,726.6 284.6,714.2 298,709.3 308.5,718.3z" fill="#1f1f1f" stroke="#1f1f1f" stroke-width=".7"/>
<path d="M268.4,743.4 247.4,706.1 274.1,701.7 295.1,726.6zM271.3,719.5 260.8,703.9 274.1,701.7 284.6,714.2zM257.9,724.7 247.4,706.1 260.8,703.9 271.3,719.5zM281.8,735 271.3,719.5 284.6,714.2 295.1,726.6zM268.4,743.4 257.9,724.7 271.3,719.5 281.8,735z" fill="#2c2c2c" stroke="#2c2c2c" stroke-width=".7"/>
<path d="M663.5,703.8 642.5,659 669.2,652.1 690.2,699.6z" fill="#353535" stroke="#353535" stroke-width=".7"/>
<path d="M636.8,708.1 615.8,675.6 642.5,659 663.5,703.8zM639.6,686.6 629.1,667.3 642.5,659 653,681.4zM626.3,691.8 615.8,675.6 629.1,667.3 639.6,686.6zM650.1,705.9 639.6,686.6 653,681.4 663.5,703.8zM636.8,708.1 626.3,691.8 639.6,686.6 650.1,705.9z" fill="#343434" stroke="#343434" stroke-width=".7"/>
<path d="M610,712.3 589,692.4 615.8,675.6 636.8,708.1zM612.9,697.1 602.4,684 615.8,675.6 626.3,691.8zM599.5,702.3 589,692.4 602.4,684 612.9,697.1zM623.4,710.2 612.9,697.1 626.3,691.8 636.8,708.1zM610,712.3 599.5,702.3 612.9,697.1 623.4,710.2z" fill="#272727" stroke="#272727" stroke-width=".7"/>
<path d="M583.3,681.7 562.3,706.6 589,692.4 610,712.3zM587.6,698.1 582.4,695.9 589,692.4 594.3,697.4zM580.9,698.9 575.7,699.5 582.4,695.9 587.6,698.1zM574.3,699.6 569,703 575.7,699.5 580.9,698.9zM567.6,700.3 562.3,706.6 569,703 574.3,699.6zM592.9,700.3 587.6,698.1 594.3,697.4 599.5,702.3zM586.2,698.2 580.9,698.9 587.6,698.1 592.9,700.3zM579.5,696.2 574.3,699.6 580.9,698.9 586.2,698.2zM572.8,694.1 567.6,700.3 574.3,699.6 579.5,696.2zM598.1,702.5 592.9,700.3 599.5,702.3 604.8,707.3zM591.4,697.6 586.2,698.2 592.9,700.3 598.1,702.5zM584.8,692.8 579.5,696.2 586.2,698.2 591.4,697.6zM578.1,687.9 572.8,694.1 579.5,696.2 584.8,692.8zM603.4,704.7 598.1,702.5 604.8,707.3 610,712.3zM596.7,697 591.4,697.6 598.1,702.5 603.4,704.7zM590,689.4 584.8,692.8 591.4,697.6 596.7,697zM583.3,681.7 578.1,687.9 584.8,692.8 590,689.4z" fill="#303030" stroke="#303030" stroke-width=".7"/>
<path d="M556.6,686 535.6,710.8 562.3,706.6 583.3,681.7z" fill="#2c2c2c" stroke="#2c2c2c" stroke-width=".7"/>
<path d="M529.9,690.2 508.9,715.1 535.6,710.8 556.6,686z" fill="#2c2c2c" stroke="#2c2c2c" stroke-width=".7"/>
<path d="M503.2,694.5 482.2,719.3 508.9,715.1 529.9,690.2z" fill="#2c2c2c" stroke="#2c2c2c" stroke-width=".7"/>
<path d="M476.4,698.7 455.4,688.7 482.2,719.3 503.2,694.5zM480.7,707.6 475.5,711.7 482.2,719.3 487.4,713.1zM474.1,702.2 468.8,704 475.5,711.7 480.7,707.6zM467.4,696.7 462.1,696.4 468.8,704 474.1,702.2zM460.7,691.2 455.4,688.7 462.1,696.4 467.4,696.7zM486,703.6 480.7,707.6 487.4,713.1 492.7,706.9zM479.3,700.3 474.1,702.2 480.7,707.6 486,703.6zM472.6,697 467.4,696.7 474.1,702.2 479.3,700.3zM465.9,693.7 460.7,691.2 467.4,696.7 472.6,697zM491.2,699.6 486,703.6 492.7,706.9 497.9,700.7zM484.6,698.5 479.3,700.3 486,703.6 491.2,699.6zM477.9,697.3 472.6,697 479.3,700.3 484.6,698.5zM471.2,696.2 465.9,693.7 472.6,697 477.9,697.3zM496.5,695.5 491.2,699.6 497.9,700.7 503.2,694.5zM489.8,696.6 484.6,698.5 491.2,699.6 496.5,695.5zM483.1,697.7 477.9,697.3 484.6,698.5 489.8,696.6zM476.4,698.7 471.2,696.2 477.9,697.3 483.1,697.7z" fill="#303030" stroke="#303030" stroke-width=".7"/>
<path d="M449.7,703 428.7,693 455.4,688.7 476.4,698.7z" fill="#151515" stroke="#151515" stroke-width=".7"/>
<path d="M423,712.1 402,697.2 428.7,693 449.7,703z" fill="#151515" stroke="#151515" stroke-width=".7"/>
<path d="M396.3,721.4 375.3,701.5 402,697.2 423,712.1z" fill="#191919" stroke="#191919" stroke-width=".7"/>
<path d="M369.6,725.7 348.6,705.7 375.3,701.5 396.3,721.4z" fill="#181818" stroke="#181818" stroke-width=".7"/>
<path d="M342.8,729.9 321.8,710 348.6,705.7 369.6,725.7z" fill="#181818" stroke="#181818" stroke-width=".7"/>
<path d="M316.1,734.2 295.1,726.6 321.8,710 342.8,729.9zM319,725.2 308.5,718.3 321.8,710 332.3,719.9zM305.6,730.4 295.1,726.6 308.5,718.3 319,725.2zM329.5,732 319,725.2 332.3,719.9 342.8,729.9zM316.1,734.2 305.6,730.4 319,725.2 329.5,732z" fill="#1d1d1d" stroke="#1d1d1d" stroke-width=".7"/>
<path d="M289.4,738.4 268.4,743.4 295.1,726.6 316.1,734.2zM292.3,735.6 281.8,735 295.1,726.6 305.6,730.4zM278.9,740.9 268.4,743.4 281.8,735 292.3,735.6zM302.8,736.3 292.3,735.6 305.6,730.4 316.1,734.2zM289.4,738.4 278.9,740.9 292.3,735.6 302.8,736.3z" fill="#191919" stroke="#191919" stroke-width=".7"/>
<path class="e" d="M289.4,738.4L268.4,743.4M289.4,738.4L316.1,734.2M316.1,734.2L295.1,726.6M316.1,734.2L342.8,729.9M342.8,729.9L321.8,710M342.8,729.9L369.6,725.7M369.6,725.7L348.6,705.7M369.6,725.7L396.3,721.4M396.3,721.4L375.3,701.5M396.3,721.4L423,712.1M423,712.1L402,697.2M423,712.1L449.7,703M449.7,703L428.7,693M449.7,703L476.4,698.7M476.4,698.7L455.4,688.7M476.4,698.7L503.2,694.5M503.2,694.5L482.2,719.3M503.2,694.5L529.9,690.2M529.9,690.2L508.9,715.1M529.9,690.2L556.6,686M556.6,686L535.6,710.8M556.6,686L583.3,681.7M583.3,681.7L562.3,706.6M583.3,681.7L610,712.3M610,712.3L601.9,704.6M600.8,703.6L600.5,703.2M610,712.3L636.8,708.1M636.8,708.1L615.8,675.6M636.8,708.1L663.5,703.8M663.5,703.8L642.5,659M663.5,703.8L690.2,699.6M690.2,699.6L669.2,652.1M268.4,743.4L247.4,706.1M268.4,743.4L295.1,726.6M295.1,726.6L274.1,701.7M295.1,726.6L321.8,710M321.8,710L300.8,698.9M321.8,710L348.6,705.7M348.6,705.7L327.6,695.7M348.6,705.7L375.3,701.5M375.3,701.5L374.3,702.6M375.3,701.5L402,697.2M402,697.2L401,698.4M402,697.2L428.7,693M428.7,693L428.1,693.7M408.7,716.6L407.7,717.8M428.7,693L455.4,688.7M455.4,688.7L454.5,689.9M441.6,705.1L434.4,713.5M455.4,688.7L456.4,689.9M465.3,700L482.2,719.3M482.2,719.3L473.7,711.3M482.2,719.3L508.9,715.1M508.9,715.1L508.1,713.8M496.3,695.7L487.9,682.6M508.9,715.1L535.6,710.8M535.6,710.8L534.9,709.5M526,691.4L514.6,668.4M535.6,710.8L562.3,706.6M562.3,706.6L561.7,705.2M553,686.6L541.3,661.7M562.3,706.6L576.1,699.2M585.5,685.2L568,649.2M591.2,691L615.8,675.6M615.8,675.6L594.8,643.4M615.8,675.6L642.5,659M642.5,659L621.5,639.1M642.5,659L669.2,652.1M669.2,652.1L648.2,634.9M247.4,706.1L226.4,743.3M247.4,706.1L274.1,701.7M274.1,701.7L273.4,703.1M259.8,727.2L253.1,739.1M274.1,701.7L300.8,698.9M300.8,698.9L300.1,700.2M300.8,698.9L327.6,695.7M327.6,695.7L326.8,697M327.6,695.7L328.6,696.8M367.5,702.8L360,692.2M404.3,718.3L407.7,717.8M407.7,717.8L407.5,717.3M398.1,698.4L386.7,675.4M407.7,717.8L434.4,713.5M434.4,713.5L433.8,712.2M425.1,693.6L413.5,668.7M434.4,713.5L448.3,706.2M456.8,689.7L440.2,652.5M468.4,694.8L487.9,682.6M487.9,682.6L466.9,647.2M487.9,682.6L514.6,668.4M514.6,668.4L493.6,643M514.6,668.4L541.3,661.7M541.3,661.7L520.3,638.7M541.3,661.7L568,649.2M568,649.2L567,651.4M568,649.2L594.8,643.4M594.8,643.4L593.9,645.2M594.8,643.4L621.5,639.1M621.5,639.1L620.6,641M621.5,639.1L648.2,634.9M648.2,634.9L647.6,636.2M226.4,743.3L205.4,725.8M226.4,743.3L253.1,739.1M253.1,739.1L252.4,737.8M241,718.7L232.1,704M253.1,739.1L265,737.2M267.3,703.4L258.9,682.4M294.7,699.6L285.6,675.7M324.6,696.2L312.3,671.4M345.5,703.9L360,692.2M360,692.2L339,652.4M360,692.2L386.7,675.4M386.7,675.4L365.7,648.2M386.7,675.4L413.5,668.7M413.5,668.7L392.5,643.9M413.5,668.7L440.2,652.5M440.2,652.5L439,655.3M440.2,652.5L466.9,647.2M466.9,647.2L466.1,649.1M466.9,647.2L493.6,643M493.6,643L492.8,644.8M493.6,643L520.3,638.7M520.3,638.7L519.7,640.1M520.3,638.7L521.4,641M553.3,656.5L552.8,655.6M583.6,645.6L579.5,636.4M612.4,640.6L606.2,624.7M205.4,725.8L184.4,678.4M205.4,725.8L232.1,704M232.1,704L211.1,659.4M232.1,704L258.9,682.4M258.9,682.4L237.9,655.2M258.9,682.4L285.6,675.7M285.6,675.7L264.6,650.9M285.6,675.7L312.3,671.4M312.3,671.4L311.4,673.2M312.3,671.4L339,652.4M339,652.4L337.9,655.3M339,652.4L365.7,648.2M365.7,648.2L365,650.1M365.7,648.2L392.5,643.9M392.5,643.9L391.7,645.8M392.5,643.9L393.5,646.2M454.4,649.8L451.6,643.4M483.4,644.8L478.3,631.7M510.8,640.3L505.1,627.4M549.1,658.3L552.8,655.6M552.8,655.6L531.8,623.2M552.8,655.6L579.5,636.4M579.5,636.4L558.5,610.8M579.5,636.4L606.2,624.7M606.2,624.7L585.2,615.1M184.4,678.4L163.4,727.2M184.4,678.4L211.1,659.4M211.1,659.4L210.2,662.3M196.2,704.3L190.1,722.5M211.1,659.4L237.9,655.2M237.9,655.2L237.2,657.1M237.9,655.2L264.6,650.9M264.6,650.9L263.9,652.8M264.6,650.9L265.6,653.2M423.6,662.9L403.9,630.1M439.4,653.3L451.6,643.4M451.6,643.4L430.6,625.9M451.6,643.4L478.3,631.7M478.3,631.7L457.3,623.6M478.3,631.7L505.1,627.4M505.1,627.4L504.1,629.7M505.1,627.4L531.8,623.2M531.8,623.2L530.8,625.5M531.8,623.2L558.5,610.8M558.5,610.8L557.6,613.2M558.5,610.8L585.2,615.1M585.2,615.1L584.8,616M163.4,727.2L142.4,716.2M163.4,727.2L190.1,722.5M190.1,722.5L188.8,721.8M170.5,712.1L169.2,711.4M190.1,722.5L203,720.2M287.1,672.7L276,637.1M318.5,667.7L302.8,622.8M345.8,651.3L329.5,626.1M378,646.2L403.9,630.1M403.9,630.1L402.7,632.3M403.9,630.1L430.6,625.9M430.6,625.9L429.9,627.2M430.6,625.9L457.3,623.6M457.3,623.6L456.6,624.9M457.3,623.6L458,625M142.4,716.2L121.4,655.8M142.4,716.2L169.2,711.4M169.2,711.4L148.2,638M169.2,711.4L171.4,710.2M189.4,674.5L174.9,623.4M216,658.7L201.6,621.8M249.7,653.5L276,637.1M276,637.1L274.7,638.7M276,637.1L302.8,622.8M302.8,622.8L301.4,625M302.8,622.8L329.5,626.1M329.5,626.1L328.5,627.2M329.5,626.1L332.7,631.7M366.8,648.3L361.9,642.5M393.9,636.9L388.6,628.3M422.4,627.2L415.4,611.5M452.1,624.1L442.1,597.4M484.4,630.8L468.8,579.5M511.8,626.3L495.5,565.4M542.7,618.1L522.2,562.2M121.4,655.8L100.4,664.3M121.4,655.8L148.2,638M148.2,638L146.7,639.5M148.2,638L174.9,623.4M174.9,623.4L173.4,625.5M174.9,623.4L201.6,621.8M201.6,621.8L200.3,623.4M201.6,621.8L215.1,644.7M248.3,653.9L234,637M270.8,640.4L260.8,625.2M296,626.2L287.5,608.6M327,625.6L314.2,591.8M344.6,645.5L361.9,642.5M361.9,642.5L340.9,580.1M361.9,642.5L388.6,628.3M388.6,628.3L367.6,565.9M388.6,628.3L415.4,611.5M415.4,611.5L394.4,561.7M415.4,611.5L442.1,597.4M442.1,597.4L430.1,597.9M442.1,597.4L468.8,579.5M468.8,579.5L456.8,587.3M468.8,579.5L495.5,565.4M495.5,565.4L494.1,566.8M495.5,565.4L522.2,562.2M522.2,562.2L520.8,563.6M100.4,664.3L79.4,635.8M100.4,664.3L123.2,659.8M123.6,654.1L106.2,630.5M145.4,640L132.9,619.8M169.8,626.3L159.6,605.5M199,621.7L186.3,588.9M212.8,641.9L234,637M234,637L213,577.1M234,637L260.8,625.2M260.8,625.2L239.8,561.4M260.8,625.2L287.5,608.6M287.5,608.6L266.5,553.1M287.5,608.6L314.2,591.8M314.2,591.8L293.2,580.3M314.2,591.8L340.9,580.1M340.9,580.1L319.9,575.1M340.9,580.1L367.6,565.9M367.6,565.9L346.6,569.8M367.6,565.9L394.4,561.7M394.4,561.7L377.4,564.4M376.4,564.6L374.4,564.9M394.4,561.7L411.6,585.3M412.8,586.9L413.1,587.3M416.7,590.4L400.1,559.8M428,597L438.9,594.8M447.1,591.7L426.8,553.1M470.2,578.7L453.5,543.8M494.1,566.4L480.2,535.1M79.4,635.8L58.4,568.4M79.4,635.8L106.2,630.5M106.2,630.5L85.2,559.1M106.2,630.5L132.9,619.8M132.9,619.8L111.9,546.5M132.9,619.8L159.6,605.5M159.6,605.5L138.6,545.7M159.6,605.5L186.3,588.9M186.3,588.9L165.3,572.3M186.3,588.9L213,577.1M213,577.1L192.1,567.1M213,577.1L239.8,561.4M239.8,561.4L218.8,561.4M239.8,561.4L266.5,553.1M266.5,553.1L245.5,553.6M266.5,553.1L293.2,580.3M293.2,580.3L272.2,541.4M293.2,580.3L319.9,575.1M319.9,575.1L298.9,530.1M319.9,575.1L346.6,569.8M346.6,569.8L325.6,514.4M346.6,569.8L370.4,565.6M371.4,565.4L373.4,565.1M373.4,565.1L352.4,486.7M373.4,565.1L400.1,559.8M400.1,559.8L379.1,475M400.1,559.8L426.8,553.1M426.8,553.1L405.8,470.7M426.8,553.1L453.5,543.8M453.5,543.8L432.5,466.5M453.5,543.8L480.2,535.1M480.2,535.1L459.2,462.2M58.4,568.4L85.2,559.1M85.2,559.1L111.9,546.5M111.9,546.5L138.6,545.7M138.6,545.7L165.3,572.3M165.3,572.3L192.1,567.1M192.1,567.1L218.8,561.4M218.8,561.4L245.5,553.6M245.5,553.6L272.2,541.4M272.2,541.4L298.9,530.1M298.9,530.1L325.6,514.4M325.6,514.4L352.4,486.7M352.4,486.7L379.1,475M379.1,475L405.8,470.7M405.8,470.7L432.5,466.5M432.5,466.5L459.2,462.2"/>
<rect class="d" x="288" y="737"/>
<rect class="d" x="315" y="733"/>
<rect class="d" x="341" y="728"/>
<rect class="d" x="368" y="724"/>
<rect class="d" x="395" y="720"/>
<rect class="d" x="422" y="711"/>
<rect class="d" x="448" y="701"/>
<rect class="d" x="475" y="697"/>
<rect class="d" x="502" y="693"/>
<rect class="d" x="528" y="689"/>
<rect class="d" x="555" y="684"/>
<rect class="d" x="582" y="680"/>
<rect class="d" x="609" y="711"/>
<rect class="d" x="635" y="707"/>
<rect class="d" x="662" y="702"/>
<rect class="d" x="689" y="698"/>
<rect class="d" x="267" y="742"/>
<rect class="d" x="294" y="725"/>
<rect class="d" x="320" y="708"/>
<rect class="d" x="347" y="704"/>
<rect class="d" x="374" y="700"/>
<rect class="d" x="401" y="696"/>
<rect class="d" x="427" y="691"/>
<rect class="d" x="454" y="687"/>
<rect class="d" x="481" y="718"/>
<rect class="d" x="507" y="714"/>
<rect class="d" x="534" y="709"/>
<rect class="d" x="561" y="705"/>
<rect class="d" x="614" y="674"/>
<rect class="d" x="641" y="657"/>
<rect class="d" x="668" y="651"/>
<rect class="d" x="246" y="705"/>
<rect class="d" x="273" y="700"/>
<rect class="d" x="299" y="697"/>
<rect class="d" x="326" y="694"/>
<rect class="d" x="406" y="716"/>
<rect class="d" x="433" y="712"/>
<rect class="d" x="486" y="681"/>
<rect class="d" x="513" y="667"/>
<rect class="d" x="540" y="660"/>
<rect class="d" x="567" y="648"/>
<rect class="d" x="593" y="642"/>
<rect class="d" x="620" y="638"/>
<rect class="d" x="647" y="633"/>
<rect class="d" x="225" y="742"/>
<rect class="d" x="252" y="738"/>
<rect class="d" x="359" y="691"/>
<rect class="d" x="385" y="674"/>
<rect class="d" x="412" y="667"/>
<rect class="d" x="439" y="651"/>
<rect class="d" x="465" y="646"/>
<rect class="d" x="492" y="641"/>
<rect class="d" x="519" y="637"/>
<rect class="d" x="204" y="724"/>
<rect class="d" x="231" y="703"/>
<rect class="d" x="257" y="681"/>
<rect class="d" x="284" y="674"/>
<rect class="d" x="311" y="670"/>
<rect class="d" x="338" y="651"/>
<rect class="d" x="364" y="647"/>
<rect class="d" x="391" y="642"/>
<rect class="d" x="551" y="654"/>
<rect class="d" x="578" y="635"/>
<rect class="d" x="605" y="623"/>
<rect class="d" x="183" y="677"/>
<rect class="d" x="210" y="658"/>
<rect class="d" x="236" y="654"/>
<rect class="d" x="263" y="649"/>
<rect class="d" x="450" y="642"/>
<rect class="d" x="477" y="630"/>
<rect class="d" x="504" y="626"/>
<rect class="d" x="530" y="622"/>
<rect class="d" x="557" y="609"/>
<rect class="d" x="584" y="614"/>
<rect class="d" x="162" y="726"/>
<rect class="d" x="189" y="721"/>
<rect class="d" x="402" y="629"/>
<rect class="d" x="429" y="624"/>
<rect class="d" x="456" y="622"/>
<rect class="d" x="141" y="715"/>
<rect class="d" x="168" y="710"/>
<rect class="d" x="275" y="636"/>
<rect class="d" x="301" y="621"/>
<rect class="d" x="328" y="625"/>
<rect class="d" x="120" y="654"/>
<rect class="d" x="147" y="637"/>
<rect class="d" x="173" y="622"/>
<rect class="d" x="200" y="620"/>
<rect class="d" x="360" y="641"/>
<rect class="d" x="387" y="627"/>
<rect class="d" x="414" y="610"/>
<rect class="d" x="441" y="596"/>
<rect class="d" x="467" y="578"/>
<rect class="d" x="494" y="564"/>
<rect class="d" x="521" y="561"/>
<rect class="d" x="99" y="663"/>
<rect class="d" x="233" y="635"/>
<rect class="d" x="259" y="624"/>
<rect class="d" x="286" y="607"/>
<rect class="d" x="313" y="590"/>
<rect class="d" x="339" y="579"/>
<rect class="d" x="366" y="564"/>
<rect class="d" x="393" y="560"/>
<rect class="d" x="78" y="634"/>
<rect class="d" x="105" y="629"/>
<rect class="d" x="131" y="618"/>
<rect class="d" x="158" y="604"/>
<rect class="d" x="185" y="587"/>
<rect class="d" x="212" y="576"/>
<rect class="d" x="238" y="560"/>
<rect class="d" x="265" y="552"/>
<rect class="d" x="292" y="579"/>
<rect class="d" x="318" y="574"/>
<rect class="d" x="345" y="568"/>
<rect class="d" x="372" y="564"/>
<rect class="d" x="399" y="558"/>
<rect class="d" x="425" y="552"/>
<rect class="d" x="452" y="542"/>
<rect class="d" x="479" y="534"/>
<rect class="d" x="57" y="567"/>
<rect class="d" x="84" y="558"/>
<rect class="d" x="110" y="545"/>
<rect class="d" x="137" y="544"/>
<rect class="d" x="164" y="571"/>
<rect class="d" x="191" y="566"/>
<rect class="d" x="217" y="560"/>
<rect class="d" x="244" y="552"/>
<rect class="d" x="271" y="540"/>
<rect class="d" x="297" y="529"/>
<rect class="d" x="324" y="513"/>
<rect class="d" x="351" y="485"/>
<rect class="d" x="378" y="473"/>
<rect class="d" x="404" y="469"/>
<rect class="d" x="431" y="465"/>
<rect class="d" x="458" y="461"/></g>
<rect class="d" x="288" y="786"/>
<text class="t" text-anchor="end" transform="translate(279.4,799.2) rotate(-9.05)">0</text>
<rect class="d" x="267" y="776"/>
<text class="t" text-anchor="end" transform="translate(258.4,789.2) rotate(-9.05)">1</text>
<rect class="d" x="246" y="766"/>
<text class="t" text-anchor="end" transform="translate(237.4,779.2) rotate(-9.05)">2</text>
<rect class="d" x="225" y="756"/>
<text class="t" text-anchor="end" transform="translate(216.4,769.2) rotate(-9.05)">3</text>
<rect class="d" x="204" y="746"/>
<text class="t" text-anchor="end" transform="translate(195.4,759.2) rotate(-9.05)">4</text>
<rect class="d" x="183" y="736"/>
<text class="t" text-anchor="end" transform="translate(174.4,749.2) rotate(-9.05)">5</text>
<rect class="d" x="162" y="726"/>
<text class="t" text-anchor="end" transform="translate(153.4,739.2) rotate(-9.05)">6</text>
<rect class="d" x="141" y="716"/>
<text class="t" text-anchor="end" transform="translate(132.4,729.1) rotate(-9.05)">7</text>
<rect class="d" x="120" y="706"/>
<text class="t" text-anchor="end" transform="translate(111.4,719.1) rotate(-9.05)">8</text>
<rect class="d" x="99" y="696"/>
<text class="t" text-anchor="end" transform="translate(90.4,709.1) rotate(-9.05)">9</text>
<rect class="d" x="78" y="686"/>
<text class="t" text-anchor="end" transform="translate(69.4,699.1) rotate(-9.05)">10</text>
<rect class="d" x="57" y="676"/>
<text class="t" text-anchor="end" transform="translate(48.4,689.1) rotate(-9.05)">11</text>
<rect class="d" x="288" y="786"/>
<text class="t" transform="translate(295.9,799.8) rotate(25.4)">0</text>
<rect class="d" x="315" y="782"/>
<text class="t" transform="translate(322.6,795.5) rotate(25.4)">1</text>
<rect class="d" x="341" y="777"/>
<text class="t" transform="translate(349.3,791.2) rotate(25.4)">2</text>
<rect class="d" x="368" y="773"/>
<text class="t" transform="translate(376.1,787) rotate(25.4)">3</text>
<rect class="d" x="395" y="769"/>
<text class="t" transform="translate(402.8,782.8) rotate(25.4)">4</text>
<rect class="d" x="422" y="765"/>
<text class="t" transform="translate(429.5,778.5) rotate(25.4)">5</text>
<rect class="d" x="448" y="760"/>
<text class="t" transform="translate(456.2,774.2) rotate(25.4)">6</text>
<rect class="d" x="475" y="756"/>
<text class="t" transform="translate(482.9,770) rotate(25.4)">7</text>
<rect class="d" x="502" y="752"/>
<text class="t" transform="translate(509.7,765.8) rotate(25.4)">8</text>
<rect class="d" x="528" y="748"/>
<text class="t" transform="translate(536.4,761.5) rotate(25.4)">9</text>
<rect class="d" x="555" y="743"/>
<text class="t" transform="translate(563.1,757.2) rotate(25.4)">10</text>
<rect class="d" x="582" y="739"/>
<text class="t" transform="translate(589.8,753) rotate(25.4)">11</text>
<rect class="d" x="609" y="735"/>
<text class="t" transform="translate(616.5,748.8) rotate(25.4)">12</text>
<rect class="d" x="635" y="731"/>
<text class="t" transform="translate(643.3,744.5) rotate(25.4)">13</text>
<rect class="d" x="662" y="726"/>
<text class="t" transform="translate(670,740.2) rotate(25.4)">14</text>
<rect class="d" x="689" y="722"/>
<text class="t" transform="translate(696.7,736) rotate(25.4)">15</text>
<text class="t" transform="translate(79,736) rotate(25.4)">− (−)</text>
<text class="t" transform="translate(541,791) rotate(-9.05)">− (−)</text>
<rect x="0" y="466" width="59" height="16" fill="#000"/>
<text class="t" text-anchor="end" x="58" y="478">1303</text>
</svg>
<div class="a" style="left:767px;top:429px;width:771px;height:434.5px;background:#d9e5f2;border:1px solid #5f5f5f;"></div>
<div class="a" style="left:768px;top:430px;width:769px;height:31px;background:linear-gradient(#bccadb,#cfdbe9 50%,#dde8f4);"></div>
<div class="a" style="left:773px;top:460px;width:756px;height:395px;background:#fff;border-top:1px solid #9a9a9a;border-left:1px solid #9a9a9a;"></div>
<div class="a" style="left:774px;top:461px;width:754px;height:393px;background:#e8e8e8;border-top:1px solid #6a6a6a;border-left:1px solid #6a6a6a;"></div>
<div class="a" style="left:775px;top:462px;width:736px;height:375px;background:#000;"></div>
<svg style="left:775px;top:440px" width="17" height="17" viewBox="0 0 17 17" shape-rendering="crispEdges"><path d="M0.5 0.5H12.5V13.5H9.5V14.5H7.5V13.5H5.5V14.5H3.5V15.5H1.5V14.5H0.5Z" fill="#fff" stroke="#000"/><path d="M13 2V11M14 3V10M12 12H10M4 16H3M13 11v1" stroke="#0a7a1a" fill="none"/><path d="M13 12h2v2h-2z" fill="#1a6a8a"/><path d="M1 2.5H5M3 2.5V5.5M1 5.5H5 M8 2.5H12M10 2.5V5.5M8 5.5H12" stroke="#e00000" fill="none"/><path d="M6.5 2L8 4L6.5 6L5 4Z" stroke="#e00000" fill="none"/><path d="M3 8.5H11" stroke="#16a020"/><path d="M3 10.5H11" stroke="#16a020"/></svg>
<div class="tt" style="left:795px;top:442px;color:#9a9a9e;transform:scaleX(0.9759)">Audi Q7 (Audi q7 mod), 383723, Avance 3 *</div>
<div class="a" style="left:1427px;top:439px;width:32px;height:18px;border:1px solid #8f9fbc;border-radius:3px;background:linear-gradient(#c5d3e3,#cfdcea);box-shadow:inset 0 0 0 1px rgba(255,255,255,.45)"></div>
<svg style="left:1427px;top:439px" width="32" height="18" viewBox="0 0 32 18"><rect x="10.5" y="8.5" width="11" height="4" rx="1" fill="#fff" stroke="#4a4a58"/></svg>
<div class="a" style="left:1461px;top:439px;width:32px;height:18px;border:1px solid #8f9fbc;border-radius:3px;background:linear-gradient(#c5d3e3,#cfdcea);box-shadow:inset 0 0 0 1px rgba(255,255,255,.45)"></div>
<svg style="left:1461px;top:439px" width="32" height="18" viewBox="0 0 32 18"><rect x="10.5" y="4.5" width="11" height="8" rx="1" fill="#fff" stroke="#4a4a58"/><rect x="13.5" y="7.5" width="5" height="2.4" fill="#8ea4c4" stroke="#4a4a58" stroke-width=".9"/></svg>
<div class="a" style="left:1495px;top:439px;width:32px;height:18px;border:1px solid #8f9fbc;border-radius:3px;background:linear-gradient(#c5d3e3,#cfdcea);box-shadow:inset 0 0 0 1px rgba(255,255,255,.45)"></div>
<svg style="left:1495px;top:439px" width="32" height="18" viewBox="0 0 32 18"><path d="M11 4.5h3.2l1.8 2.4 1.8-2.4H21l-3.3 4 3.3 4h-3.2L16 10.1l-1.8 2.4H11l3.3-4z" fill="#fff" stroke="#4a4a58" stroke-width="1"/></svg>
<div class="a" style="left:1511px;top:462px;width:16px;height:375px;background:#f0f0f0;"></div>
<div class="a" style="left:1512px;top:479px;width:14px;height:341px;background:#cdcdcd;"></div>
<svg style="left:1511px;top:462px" width="16" height="375"><polyline points="4.5,11 8,7.5 11.5,11" fill="none" stroke="#5a5a5a" stroke-width="1.9"/><polyline points="4.5,365 8,368.5 11.5,365" fill="none" stroke="#5a5a5a" stroke-width="1.9"/></svg>
<div class="a" style="left:1511px;top:837px;width:16px;height:16px;background:#c2c2c2;"></div>
<div class="a" style="left:775px;top:837px;width:97px;height:16px;background:#808080;"></div>
<div class="a" style="left:872px;top:837px;width:639px;height:16px;background:#f0f0f0;"></div>
<div class="a" style="left:890px;top:838px;width:524px;height:14px;background:#cdcdcd;"></div>
<svg style="left:872px;top:837px" width="639" height="16"><polyline points="10.5,4.5 7.0,8 10.5,11.5" fill="none" stroke="#5a5a5a" stroke-width="1.9"/><polyline points="627.5,4.5 631.0,8 627.5,11.5" fill="none" stroke="#5a5a5a" stroke-width="1.9"/></svg>
<svg style="left:775px;top:836px" width="98" height="17" viewBox="0 -1 98 17"><polygon points="64,1 97,1 90,14.5 70.5,14.5" fill="#c0c0c0" stroke="none"/><polyline points="64,1 70.5,14.5 90,14.5 97,1" fill="none" stroke="#000" stroke-width="1.1"/><polygon points="38,1 70.5,1 64,14.5 44.5,14.5" fill="#c0c0c0" stroke="none"/><polyline points="38,1 44.5,14.5 64,14.5 70.5,1" fill="none" stroke="#000" stroke-width="1.1"/><polygon points="0,0 45,0 38.5,14.5 6.5,14.5" fill="#fff" stroke="none"/><polyline points="0,0 6.5,14.5 38.5,14.5 45,0" fill="none" stroke="#000" stroke-width="1.1"/><path d="M6.5 13.5h6" stroke="#000" stroke-width="1"/></svg>
<div class="tab" style="left:780px;top:838px">Text</div>
<div class="tab" style="left:822px;top:838px">2d</div>
<div class="tab" style="left:848px;top:838px">3d</div>
<div class="a" style="left:767px;top:427px;width:770px;height:3px;background:#808080;"></div>
<div class="a" style="left:775px;top:462px;width:736px;height:375px;overflow:hidden">
<div class="mono" style="left:0.6px;top:1px">                                               −(−,−)/−</div>
<div class="mono" style="left:0.6px;top:17px">     −   0             2             4             6             8             10</div>
<div class="mono" style="left:0.6px;top:33px">−               1             3             5             7             9             11</div>
<div class="mono" style="left:0.6px;top:65px">    0         0   −128    105   −299   −235     85   −418   −410     21   −137     21    512</div>
<div class="mono" style="left:0.6px;top:81px">    1         0    −21    106   −299    −85    211   −414   −405    137   −128     30    555</div>
<div class="mono" style="left:0.6px;top:97px">    2         0     85     94   −299     64    211   −410   −320    226   −119     85    627</div>
<div class="mono" style="left:0.6px;top:113px">    3         0     85     85   −299     85    211   −410   −171    203   −111    171    597</div>
<div class="mono" style="left:0.6px;top:129px">    4         0     85   −213   −192     85   −341   −405    −21   −222   −102    277    333</div>
<div class="mono" style="left:0.6px;top:145px">    5        43     85   −213    −43    211   −337   −405     85   −213    −85    341    341</div>
<div class="mono" style="left:0.6px;top:161px">    6        85     85   −213     64    211   −333   −256    171   −205    −21    439    354</div>
<div class="mono" style="left:0.6px;top:177px">    7        85     85   −213     85    211   −320    −85    107   −201     85    474    384</div>
<div class="mono" style="left:0.6px;top:193px">    8        85   −213   −128    187   −320   −256    −21   −329   −196    192    205    452</div>
<div class="mono" style="left:0.6px;top:209px">    9        85   −213    −21    196   −316   −128     85   −320   −192    256    213    512</div>
<div class="mono" style="left:0.6px;top:225px">   10        85   −213     64    196   −311     21     85   −316   −107    341    222    610</div>
<div class="mono" style="left:0.6px;top:241px">   11        85   −213     85    196   −299     85     68   −311      0    341    226    811</div>
<div class="mono" style="left:0.6px;top:257px">   12      −213   −128    156   −307   −235     85   −427   −307     85     −9    235    875</div>
<div class="mono" style="left:0.6px;top:273px">   13      −213    −21    169   −303   −107     85   −422   −303    201      0    256    875</div>
<div class="mono" style="left:0.6px;top:289px">   14      −213     85    169   −299     21    154   −418   −299    286      9    299    875</div>
<div class="mono" style="left:0.6px;top:305px">   15      −213    107    169   −290     85     81   −414   −128    277     17    337    875</div>
<div class="a" style="left:0;top:55px;width:736px;height:1px;background:#ff0a7c"></div>
<div class="a" style="left:0;top:57px;width:736px;height:1px;background:#ff0a7c"></div>
<div class="a" style="left:58px;top:0;width:1px;height:320px;background:#ff0a7c"></div>
<div class="a" style="left:60px;top:0;width:1px;height:320px;background:#ff0a7c"></div>
</div>
<div class="a" style="left:767px;top:-14px;width:773px;height:440.5px;background:#b9d1ea;border:1px solid #3a3a3a;"></div>
<div class="a" style="left:768px;top:425.0px;width:771px;height:1px;background:#2cc4e6;"></div>
<div class="a" style="left:768px;top:-13px;width:771px;height:31px;background:linear-gradient(#9dbbdb,#a9c4e2 45%,#b9d1ea);"></div>
<div class="a" style="left:775px;top:17px;width:756px;height:402px;background:#fff;border-top:1px solid #9a9a9a;border-left:1px solid #9a9a9a;"></div>
<div class="a" style="left:776px;top:18px;width:754px;height:400px;background:#e8e8e8;border-top:1px solid #6a6a6a;border-left:1px solid #6a6a6a;"></div>
<div class="a" style="left:777px;top:19px;width:736px;height:382px;background:#000;"></div>
<svg style="left:777px;top:-3px" width="17" height="17" viewBox="0 0 17 17" shape-rendering="crispEdges"><path d="M0.5 0.5H12.5V13.5H9.5V14.5H7.5V13.5H5.5V14.5H3.5V15.5H1.5V14.5H0.5Z" fill="#fff" stroke="#000"/><path d="M13 2V11M14 3V10M12 12H10M4 16H3M13 11v1" stroke="#0a7a1a" fill="none"/><path d="M13 12h2v2h-2z" fill="#1a6a8a"/><path d="M1 2.5H5M3 2.5V5.5M1 5.5H5 M8 2.5H12M10 2.5V5.5M8 5.5H12" stroke="#e00000" fill="none"/><path d="M6.5 2L8 4L6.5 6L5 4Z" stroke="#e00000" fill="none"/><path d="M3 8.5H11" stroke="#16a020"/><path d="M3 10.5H11" stroke="#16a020"/></svg>
<div class="tt" style="left:797px;top:-1px;color:#000;transform:scaleX(0.9759)">Audi Q7 (Audi q7 mod), 383723, Avance 2 *</div>
<div class="a" style="left:1429px;top:-4px;width:32px;height:18px;border:1px solid #5c7ba3;border-radius:3px;background:linear-gradient(#cfe0f3,#bdd2ea 48%,#9db9d9 52%,#b5cde8);box-shadow:inset 0 0 0 1px rgba(255,255,255,.45)"></div>
<svg style="left:1429px;top:-4px" width="32" height="18" viewBox="0 0 32 18"><rect x="10.5" y="8.5" width="11" height="4" rx="1" fill="#fff" stroke="#4a4a58"/></svg>
<div class="a" style="left:1463px;top:-4px;width:32px;height:18px;border:1px solid #5c7ba3;border-radius:3px;background:linear-gradient(#cfe0f3,#bdd2ea 48%,#9db9d9 52%,#b5cde8);box-shadow:inset 0 0 0 1px rgba(255,255,255,.45)"></div>
<svg style="left:1463px;top:-4px" width="32" height="18" viewBox="0 0 32 18"><rect x="10.5" y="4.5" width="11" height="8" rx="1" fill="#fff" stroke="#4a4a58"/><rect x="13.5" y="7.5" width="5" height="2.4" fill="#8ea4c4" stroke="#4a4a58" stroke-width=".9"/></svg>
<div class="a" style="left:1497px;top:-4px;width:32px;height:18px;border:1px solid #5e2a22;border-radius:3px;background:linear-gradient(#e3a99b,#d68573 48%,#c23f29 52%,#cf5c47);box-shadow:inset 0 0 0 1px rgba(255,255,255,.45)"></div>
<svg style="left:1497px;top:-4px" width="32" height="18" viewBox="0 0 32 18"><path d="M11 4.5h3.2l1.8 2.4 1.8-2.4H21l-3.3 4 3.3 4h-3.2L16 10.1l-1.8 2.4H11l3.3-4z" fill="#fff" stroke="#4a4a58" stroke-width="1"/></svg>
<div class="a" style="left:1513px;top:19px;width:16px;height:382px;background:#f0f0f0;"></div>
<div class="a" style="left:1514px;top:36px;width:14px;height:348px;background:#cdcdcd;"></div>
<svg style="left:1513px;top:19px" width="16" height="382"><polyline points="4.5,11 8,7.5 11.5,11" fill="none" stroke="#5a5a5a" stroke-width="1.9"/><polyline points="4.5,372 8,375.5 11.5,372" fill="none" stroke="#5a5a5a" stroke-width="1.9"/></svg>
<div class="a" style="left:1513px;top:401px;width:16px;height:16px;background:#c2c2c2;"></div>
<div class="a" style="left:777px;top:401px;width:97px;height:16px;background:#808080;"></div>
<div class="a" style="left:874px;top:401px;width:639px;height:16px;background:#f0f0f0;"></div>
<div class="a" style="left:892px;top:402px;width:390px;height:14px;background:#cdcdcd;"></div>
<svg style="left:874px;top:401px" width="639" height="16"><polyline points="10.5,4.5 7.0,8 10.5,11.5" fill="none" stroke="#5a5a5a" stroke-width="1.9"/><polyline points="627.5,4.5 631.0,8 627.5,11.5" fill="none" stroke="#5a5a5a" stroke-width="1.9"/></svg>
<svg style="left:777px;top:400px" width="98" height="17" viewBox="0 -1 98 17"><polygon points="64,1 97,1 90,14.5 70.5,14.5" fill="#c0c0c0" stroke="none"/><polyline points="64,1 70.5,14.5 90,14.5 97,1" fill="none" stroke="#000" stroke-width="1.1"/><polygon points="38,1 70.5,1 64,14.5 44.5,14.5" fill="#c0c0c0" stroke="none"/><polyline points="38,1 44.5,14.5 64,14.5 70.5,1" fill="none" stroke="#000" stroke-width="1.1"/><polygon points="0,0 45,0 38.5,14.5 6.5,14.5" fill="#fff" stroke="none"/><polyline points="0,0 6.5,14.5 38.5,14.5 45,0" fill="none" stroke="#000" stroke-width="1.1"/><path d="M6.5 13.5h6" stroke="#000" stroke-width="1"/></svg>
<div class="tab" style="left:782px;top:402px">Text</div>
<div class="tab" style="left:824px;top:402px">2d</div>
<div class="tab" style="left:850px;top:402px">3d</div>
<div class="a" style="left:777px;top:19px;width:736px;height:382px;overflow:hidden">
<div class="mono" style="left:0.6px;top:1px">                                                        Crankshaft Angle(IQ,RPM)/°</div>
<div class="mono" style="left:0.6px;top:17px">    mg   0                   8                   18                  30                  44</div>
<div class="mono" style="left:0.6px;top:33px">RPM                4                   12                  24                  36</div>
<div class="mono" style="left:0.6px;top:65px">  650         0,00      0,00      0,00      0,00      0,00      0,43      0,85      0,85</div>
<div class="mono" style="left:0.6px;top:81px">  720        −2,13     −2,13     −2,13     −2,13     −1,28     −0,21      0,85      0,85</div>
<div class="mono" style="left:0.6px;top:97px">  810        −2,13     −2,13     −2,13     −2,13     −1,28     −0,21      0,85      1,07</div>
<div class="mono" style="left:0.6px;top:113px">  850        −2,13     −2,13     −2,13     −2,13     −1,28     −0,21      0,64      0,85</div>
<div class="mono" style="left:0.6px;top:129px">  950        −2,99     −2,99     −2,99     −2,99     −1,92     −0,43      0,64      0,85</div>
<div class="mono" style="left:0.6px;top:145px"> 1100        −3,07     −3,03     −2,99     −2,90     −2,35     −0,85      0,64      0,85</div>
<div class="mono" style="left:0.6px;top:161px"> 1200        −3,20     −3,16     −3,11     −2,99     −2,35     −1,07      0,21      0,85</div>
<div class="mono" style="left:0.6px;top:177px"> 1350        −3,41     −3,37     −3,33     −3,20     −2,56     −1,28      0,21      0,85</div>
<div class="mono" style="left:0.6px;top:193px"> 1500        −4,18     −4,14     −4,10     −4,10     −4,05     −4,05     −2,56     −0,85</div>
<div class="mono" style="left:0.6px;top:209px"> 1750        −4,27     −4,22     −4,18     −4,14     −4,10     −4,05     −3,20     −1,71</div>
<div class="mono" style="left:0.6px;top:225px"> 2000        −3,29     −3,20     −3,16     −3,11     −3,07     −3,03     −2,99     −1,28</div>
<div class="mono" style="left:0.6px;top:241px"> 2250        −2,22     −2,13     −2,05     −2,01     −1,96     −1,92     −1,07      0,00</div>
<div class="mono" style="left:0.6px;top:257px"> 2500        −1,37     −1,28     −1,19     −1,11     −1,02     −0,85     −0,21      0,85</div>
<div class="mono" style="left:0.6px;top:273px"> 3000        −0,09      0,00      0,09      0,17      0,21      0,30      0,85      1,71</div>
<div class="mono" style="left:0.6px;top:289px"> 3500         2,05      2,13      2,22      2,26      2,35      2,56      2,99      3,37</div>
<div class="mono" style="left:0.6px;top:305px"> 4400         3,33      3,41      3,54      3,84      4,52      5,12      6,10      8,11</div>
<div class="a" style="left:0;top:55px;width:736px;height:1px;background:#ff0a7c"></div>
<div class="a" style="left:0;top:57px;width:736px;height:1px;background:#ff0a7c"></div>
<div class="a" style="left:58px;top:0;width:1px;height:320px;background:#ff0a7c"></div>
<div class="a" style="left:60px;top:0;width:1px;height:320px;background:#ff0a7c"></div>
<div class="a" style="left:392px;top:54px;width:72px;height:5px;background:#fff"></div>
<div class="a" style="left:392px;top:55px;width:72px;height:1px;background:#00f587"></div>
<div class="a" style="left:392px;top:57px;width:72px;height:1px;background:#00f587"></div>
<div class="a" style="left:57px;top:160px;width:5px;height:16px;background:#fff"></div>
<div class="a" style="left:58px;top:160px;width:1px;height:16px;background:#00f587"></div>
<div class="a" style="left:60px;top:160px;width:1px;height:16px;background:#00f587"></div>
</div>
</body></html>
